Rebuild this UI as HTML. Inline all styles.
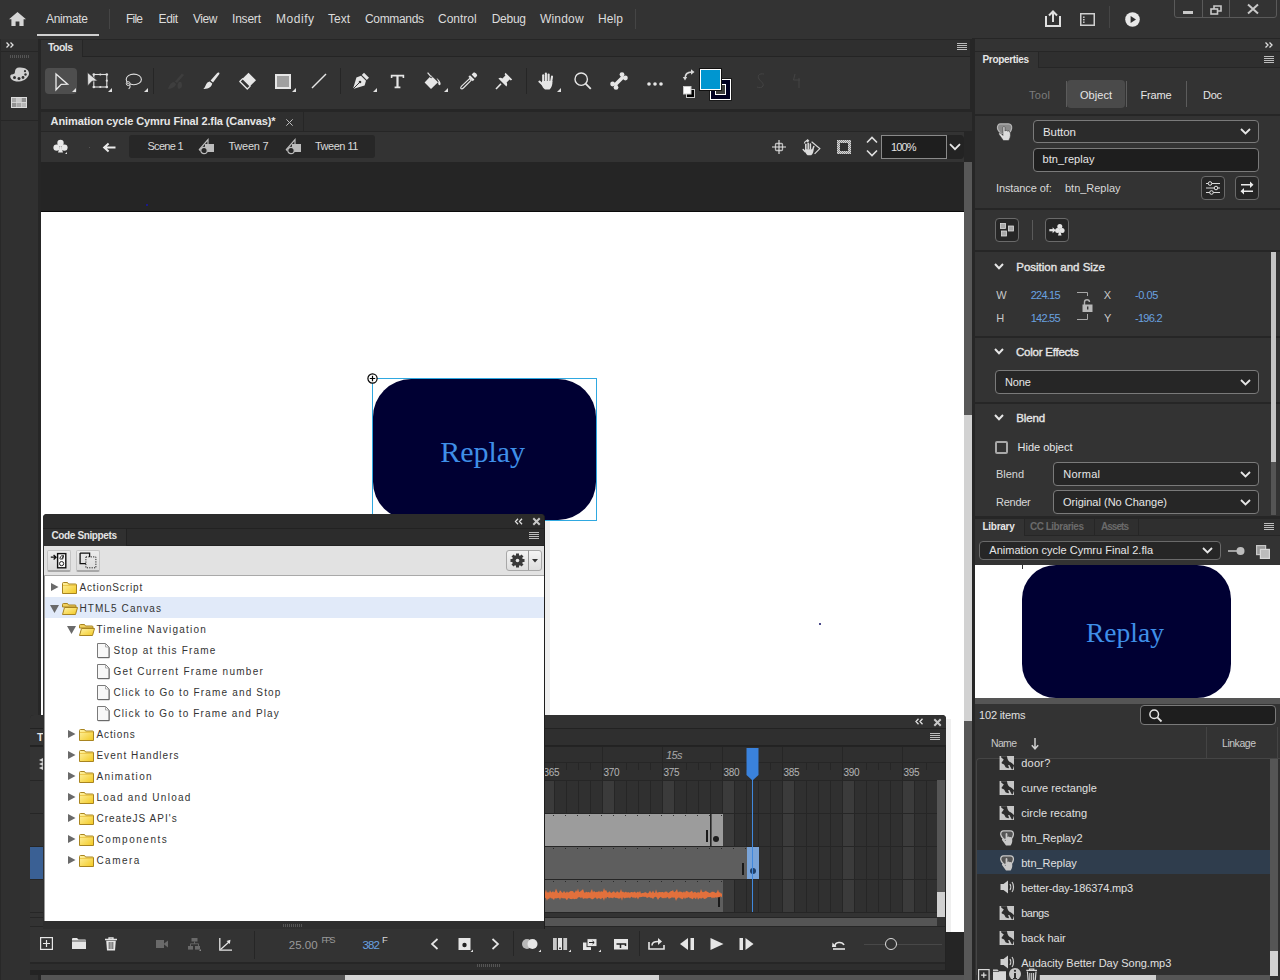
<!DOCTYPE html>
<html><head><meta charset="utf-8">
<style>
*{box-sizing:border-box;margin:0;padding:0}
html,body{width:1280px;height:980px;overflow:hidden;background:#262626;font-family:"Liberation Sans",sans-serif;color:#d8d8d8;font-size:12px;position:relative}
.a{position:absolute}
.t{position:absolute;white-space:nowrap;line-height:1}
svg{position:absolute;overflow:visible}
</style></head><body>
<!-- ============ MENUBAR ============ -->
<div class="a" style="left:0;top:0;width:1280px;height:39px;background:#333333"></div>
<svg style="left:9px;top:12px" width="17" height="14" viewBox="0 0 17 14"><path d="M8.5 0 L17 7.2 L14.6 7.2 L14.6 14 L10.4 14 L10.4 9.6 L6.6 9.6 L6.6 14 L2.4 14 L2.4 7.2 L0 7.2 Z" fill="#d6d6d6"/></svg>
<div class="t" style="left:46.00px;top:12.84px;font-size:12.0px;color:#dcdcdc;letter-spacing:-0.337px">Animate</div>
<div class="a" style="left:37px;top:34px;width:62px;height:2px;background:#cfcfcf"></div>
<div class="a" style="left:109px;top:9px;width:1px;height:20px;background:#454545"></div>
<div class="t" style="left:126.00px;top:12.84px;font-size:12.0px;color:#dcdcdc;letter-spacing:-0.779px">File</div>
<div class="t" style="left:158.60px;top:12.84px;font-size:12.0px;color:#dcdcdc;letter-spacing:-0.393px">Edit</div>
<div class="t" style="left:193.00px;top:12.84px;font-size:12.0px;color:#dcdcdc;letter-spacing:-0.431px">View</div>
<div class="t" style="left:232.00px;top:12.84px;font-size:12.0px;color:#dcdcdc;letter-spacing:-0.202px">Insert</div>
<div class="t" style="left:276.00px;top:12.84px;font-size:12.0px;color:#dcdcdc;letter-spacing:0.531px">Modify</div>
<div class="t" style="left:328.00px;top:12.84px;font-size:12.0px;color:#dcdcdc;letter-spacing:-0.003px">Text</div>
<div class="t" style="left:365.00px;top:12.84px;font-size:12.0px;color:#dcdcdc;letter-spacing:-0.336px">Commands</div>
<div class="t" style="left:438.00px;top:12.84px;font-size:12.0px;color:#dcdcdc;letter-spacing:0.003px">Control</div>
<div class="t" style="left:491.70px;top:12.84px;font-size:12.0px;color:#dcdcdc;letter-spacing:-0.265px">Debug</div>
<div class="t" style="left:540.00px;top:12.84px;font-size:12.0px;color:#dcdcdc;letter-spacing:0.184px">Window</div>
<div class="t" style="left:598.00px;top:12.84px;font-size:12.0px;color:#dcdcdc;letter-spacing:0.107px">Help</div>
<div class="a" style="left:635px;top:9px;width:1px;height:20px;background:#454545"></div>
<!-- share -->
<svg style="left:1045px;top:10px" width="16" height="17" viewBox="0 0 16 17"><path d="M1 6 V16 H15 V6" fill="none" stroke="#e0e0e0" stroke-width="2"/><path d="M8 12 V2 M4 5.5 L8 1.5 L12 5.5" fill="none" stroke="#e0e0e0" stroke-width="2"/></svg>
<!-- panel icon -->
<svg style="left:1080px;top:13px" width="15" height="13" viewBox="0 0 15 13"><rect x="0.75" y="0.75" width="13.5" height="11.5" fill="none" stroke="#d0d0d0" stroke-width="1.5"/><rect x="3" y="3.5" width="1.6" height="1.4" fill="#d0d0d0"/><rect x="3" y="6" width="1.6" height="1.4" fill="#d0d0d0"/><rect x="3" y="8.5" width="1.6" height="1.4" fill="#d0d0d0"/></svg>
<div class="a" style="left:1109px;top:6px;width:1px;height:22px;background:#454545"></div>
<svg style="left:1125px;top:12px" width="15" height="15" viewBox="0 0 15 15"><circle cx="7.5" cy="7.5" r="7.3" fill="#e8e8e8"/><path d="M5.6 4 L11 7.5 L5.6 11 Z" fill="#2f2f2f"/></svg>
<!-- window controls -->
<div class="a" style="left:1174px;top:-3px;width:103px;height:21px;border:1px solid #5a5a5a;border-radius:3px"></div>
<div class="a" style="left:1202px;top:0;width:1px;height:18px;background:#5a5a5a"></div>
<div class="a" style="left:1229px;top:0;width:1px;height:18px;background:#5a5a5a"></div>
<div class="a" style="left:1183px;top:11px;width:10px;height:3px;background:#c8c8c8"></div>
<svg style="left:1210px;top:5px" width="12" height="10" viewBox="0 0 12 10"><rect x="1" y="4" width="6.5" height="5" fill="none" stroke="#c8c8c8" stroke-width="1.6"/><path d="M4 4 V1 H11 V6 H7.5" fill="none" stroke="#c8c8c8" stroke-width="1.6"/></svg>
<svg style="left:1247px;top:4px" width="12" height="10" viewBox="0 0 12 10"><path d="M1 0.5 L11 9.5 M11 0.5 L1 9.5" stroke="#c8c8c8" stroke-width="2"/></svg>

<!-- ============ LEFT STRIP ============ -->
<div class="a" style="left:0;top:39px;width:38px;height:941px;background:#303030;border-left:1px solid #282828"></div>
<div class="a" style="left:38px;top:39px;width:3px;height:942px;background:#262626"></div>
<div class="a" style="left:1px;top:51px;width:37px;height:1px;background:#262626"></div>
<svg style="left:6px;top:42px" width="9" height="6" viewBox="0 0 9 6"><path d="M0.5 0.5 L3 3 L0.5 5.5 M4.5 0.5 L7 3 L4.5 5.5" fill="none" stroke="#e0e0e0" stroke-width="1.3"/></svg>
<div class="a" style="left:10px;top:55px;width:19px;height:3px;background:repeating-linear-gradient(90deg,#555 0 1px,transparent 1px 2px)"></div>
<svg style="left:10px;top:67px" width="20" height="15" viewBox="0 0 20 15"><path d="M9 0.5 C15 0 19.5 3 19 7 C18.5 10 15 14 9 14.5 C3 14.8 0 12 0.3 9 C0.6 7 3.5 7.5 4.5 6.5 C5.5 5.5 4 1 9 0.5 Z" fill="#d0d0d0"/><circle cx="4.5" cy="10.5" r="1.5" fill="#303030"/><circle cx="9" cy="11.5" r="1.5" fill="#303030"/><circle cx="13" cy="10.5" r="1.4" fill="#303030"/><circle cx="15.5" cy="7.5" r="1.2" fill="#303030"/><circle cx="15" cy="4.2" r="1.1" fill="#303030"/></svg>
<svg style="left:11px;top:97px" width="16" height="12" viewBox="0 0 16 12"><rect x="0" y="0" width="16" height="11" fill="#dcdcdc"/><rect x="1" y="1" width="4.3" height="4" fill="#a8a8a8"/><rect x="5.8" y="1" width="4.3" height="4" fill="#c8c8c8"/><rect x="10.6" y="1" width="4.4" height="4" fill="#909090"/><rect x="1" y="5.8" width="4.3" height="4.2" fill="#909090"/><rect x="5.8" y="5.8" width="4.3" height="4.2" fill="#a8a8a8"/><rect x="10.6" y="5.8" width="4.4" height="4.2" fill="#b8b8b8"/></svg>
<div class="a" style="left:1px;top:120px;width:37px;height:1px;background:#262626"></div>

<!-- ============ TOOLS PANEL ============ -->
<div class="a" style="left:41px;top:39px;width:931px;height:73px;background:#262626"></div>
<div class="a" style="left:41px;top:40px;width:929px;height:16px;background:#2f2f2f"></div>
<div class="a" style="left:41px;top:40px;width:41px;height:17px;background:#333333"></div>
<div class="a" style="left:82px;top:40px;width:1px;height:17px;background:#262626"></div>
<div class="t" style="left:48.00px;top:41.71px;font-size:10.5px;color:#e4e4e4;font-weight:bold;letter-spacing:-0.555px">Tools</div>
<div class="a" style="left:41px;top:57px;width:929px;height:52px;background:#333333"></div>
<div class="a" style="left:82px;top:56px;width:888px;height:1px;background:#242424"></div>
<svg style="left:957px;top:43px" width="10" height="8" viewBox="0 0 10 8"><path d="M0 0.5H10M0 2.5H10M0 4.5H10M0 6.5H10" stroke="#bdbdbd" stroke-width="1"/></svg>
<!-- tool icons -->
<div class="a" style="left:45px;top:68px;width:32px;height:26px;background:#4e4e4e;border-radius:4px"></div>
<svg style="left:55px;top:73px" width="14" height="18" viewBox="0 0 14 18"><path d="M1 1 L12.6 11.2 L6.2 11.4 L1 16.8 Z" fill="none" stroke="#ececec" stroke-width="1.3" stroke-linejoin="miter"/></svg>
<svg style="left:72px;top:88px" width="4" height="4" viewBox="0 0 4 4"><path d="M4 0 V4 H0 Z" fill="#e0e0e0"/></svg>
<!-- free transform -->
<svg style="left:87px;top:72px" width="21" height="17" viewBox="0 0 21 17"><rect x="6.8" y="2.5" width="13" height="12.5" fill="none" stroke="#e0e0e0" stroke-width="1.1"/><g fill="#e0e0e0"><circle cx="6.8" cy="2.5" r="1.3"/><circle cx="19.8" cy="2.5" r="1.3"/><circle cx="6.8" cy="15" r="1.3"/><circle cx="19.8" cy="15" r="1.3"/><circle cx="13.3" cy="2.5" r="1.1"/><circle cx="13.3" cy="15" r="1.1"/><circle cx="19.8" cy="8.7" r="1.1"/></g><path d="M0.5 0.5 L10.5 8.8 L5 9.2 L0.8 13.8 Z" fill="#e0e0e0" stroke="#333" stroke-width="0.6"/></svg>
<svg style="left:108px;top:88px" width="4" height="4" viewBox="0 0 4 4"><path d="M4 0 V4 H0 Z" fill="#e0e0e0"/></svg>
<!-- lasso -->
<svg style="left:124px;top:73px" width="18" height="17" viewBox="0 0 18 17"><ellipse cx="9.8" cy="6.4" rx="7.6" ry="5.3" fill="none" stroke="#e0e0e0" stroke-width="1.1"/><circle cx="4.2" cy="10.6" r="1.9" fill="#333" stroke="#e0e0e0" stroke-width="1"/><path d="M3 10.6 H5.4" stroke="#e0e0e0" stroke-width="0.8"/><path d="M5.6 12 C6.6 13.4 6 14.8 4.6 15.8" fill="none" stroke="#e0e0e0" stroke-width="1.1"/></svg>
<svg style="left:144px;top:88px" width="4" height="4" viewBox="0 0 4 4"><path d="M4 0 V4 H0 Z" fill="#e0e0e0"/></svg>
<div class="a" style="left:153px;top:68px;width:1px;height:26px;background:#262626"></div>
<!-- dim brush -->
<svg style="left:167px;top:73px" width="18" height="17" viewBox="0 0 18 17"><path d="M15 0.5 L17 2 L10 10 L8 8.5 Z M7 9 C4 9 2.5 12 1 16 C5 15.5 8.5 14 9 11 Z" fill="#3e3e3e"/><path d="M12 9 C10 11 10 15 12 16 C15 15 16 12 14 9 Z" fill="#3e3e3e"/></svg>
<!-- brush -->
<svg style="left:203px;top:72px" width="17" height="18" viewBox="0 0 17 18"><path d="M15.8 0.6 C16.6 1 16.6 1.8 16 2.6 L10 10.6 L7.6 8.6 L14.2 1 C14.7 0.5 15.2 0.3 15.8 0.6 Z" fill="#e6e6e6"/><path d="M6.6 9.4 L9.2 11.6 C8.8 14.6 6 17.2 0.4 17 C2.4 15.8 2.6 12 4.4 10.6 C5 10 5.8 9.6 6.6 9.4 Z" fill="#e6e6e6"/></svg>
<!-- eraser -->
<svg style="left:239px;top:72px" width="18" height="18" viewBox="0 0 18 18"><path d="M9.5 0.8 L17 8.3 L11.2 14.1 L3.7 6.6 Z" fill="#e6e6e6"/><path d="M3.7 6.6 L11.2 14.1 L8.3 17 L0.8 9.5 Z" fill="none" stroke="#e6e6e6" stroke-width="1.3" stroke-linejoin="round"/></svg>
<!-- rect -->
<div class="a" style="left:275px;top:74px;width:16px;height:15px;background:#a0a0a0;border:2px solid #e6e6e6"></div>
<svg style="left:292px;top:88px" width="4" height="4" viewBox="0 0 4 4"><path d="M4 0 V4 H0 Z" fill="#e0e0e0"/></svg>
<!-- line -->
<svg style="left:311px;top:73px" width="16" height="16" viewBox="0 0 16 16"><path d="M1 15 L15 1" stroke="#e6e6e6" stroke-width="1.4"/></svg>
<div class="a" style="left:340px;top:68px;width:1px;height:26px;background:#262626"></div>
<!-- pen -->
<svg style="left:352px;top:72px" width="18" height="18" viewBox="0 0 18 18"><path d="M12 0.8 L17 5.8 L14.8 8 L9.8 3 Z" fill="#e6e6e6"/><path d="M9 3.8 L14 8.8 L12.6 13.6 L1 17 L4.4 5.4 Z" fill="#e6e6e6"/><path d="M1 17 L7.2 10.8" stroke="#333" stroke-width="1"/><circle cx="8" cy="10" r="1.3" fill="#333"/></svg>
<svg style="left:373px;top:88px" width="4" height="4" viewBox="0 0 4 4"><path d="M4 0 V4 H0 Z" fill="#e0e0e0"/></svg>
<!-- text T -->
<svg style="left:390px;top:74px" width="15" height="15" viewBox="0 0 15 15"><path d="M0.8 0.8 H14.2 V4 H12.6 V2.6 H8.6 V12.6 H10.4 V14.2 H4.6 V12.6 H6.4 V2.6 H2.4 V4 H0.8 Z" fill="#e6e6e6"/></svg>
<!-- bucket -->
<svg style="left:424px;top:72px" width="18" height="18" viewBox="0 0 18 18"><path d="M3.6 0.6 L6.8 4.4" stroke="#e6e6e6" stroke-width="1.2"/><path d="M7.2 3.4 L14 10.2 L7 17 L0.6 10.6 Z" fill="#e6e6e6"/><path d="M6 5 C7.5 6 8 6 8 4.5" fill="none" stroke="#333" stroke-width="1"/><path d="M12.5 6 C14.5 7 16 9 16.5 11 C17 13 15.5 14 14.5 12.5 C14.2 11.5 14 10.5 14.5 9.5" fill="#e6e6e6"/></svg>
<svg style="left:444px;top:88px" width="4" height="4" viewBox="0 0 4 4"><path d="M4 0 V4 H0 Z" fill="#e0e0e0"/></svg>
<!-- eyedropper -->
<svg style="left:460px;top:72px" width="18" height="18" viewBox="0 0 18 18"><path d="M13.6 0.6 C15 -0.2 17.8 2.6 17 4 L15 6 L11.6 2.6 Z" fill="#e6e6e6"/><path d="M10 3.2 L14.4 7.6 L12.8 9.2 L8.4 4.8 Z" fill="#e6e6e6"/><path d="M9.6 6.6 L11.2 8.2 L3.4 16 C2.6 16.8 1.2 16.8 0.9 16.6 C0.7 16.3 0.8 15 1.6 14.2 Z" fill="none" stroke="#e6e6e6" stroke-width="1.1"/></svg>
<!-- pin -->
<svg style="left:495px;top:72px" width="18" height="18" viewBox="0 0 18 18"><path d="M10.5 0.8 L17.2 7.5 L15.8 8.4 L14.6 7.6 L11.6 10.6 C12.4 12 12.3 13.6 11.4 14.6 L3.4 6.6 C4.4 5.7 6 5.6 7.4 6.4 L10.4 3.4 L9.6 2.2 Z" fill="#e6e6e6"/><path d="M6 11.8 L1 17" stroke="#e6e6e6" stroke-width="1.6"/></svg>
<div class="a" style="left:526px;top:68px;width:1px;height:26px;background:#262626"></div>
<!-- hand -->
<svg style="left:538px;top:72px" width="17" height="18" viewBox="0 0 17 18"><g stroke="#e6e6e6" stroke-linecap="round" fill="none"><path d="M5.2 9 V3.2" stroke-width="2.1"/><path d="M7.9 8.5 V1.6" stroke-width="2.1"/><path d="M10.6 8.5 V2.6" stroke-width="2.1"/><path d="M13.2 9.5 L14 4.6" stroke-width="2.1"/><path d="M4.6 12.6 L1.4 9.6" stroke-width="2.1"/></g><path d="M4 9 H14.4 C14.6 12.5 13.8 15.6 11.6 17.4 H7 C5.4 16.4 4.2 14.6 3.6 12.4 Z" fill="#e6e6e6"/></svg>
<svg style="left:557px;top:88px" width="4" height="4" viewBox="0 0 4 4"><path d="M4 0 V4 H0 Z" fill="#e0e0e0"/></svg>
<!-- zoom -->
<svg style="left:574px;top:72px" width="18" height="18" viewBox="0 0 18 18"><circle cx="7.2" cy="7.2" r="6.2" fill="none" stroke="#e6e6e6" stroke-width="1.4"/><path d="M11.6 11.6 L16.8 16.8" stroke="#e6e6e6" stroke-width="1.8"/></svg>
<!-- bone -->
<svg style="left:610px;top:72px" width="18" height="18" viewBox="0 0 18 18"><path d="M4.5 13.5 L13.5 4.5" stroke="#e6e6e6" stroke-width="3.6"/><circle cx="12" cy="2.6" r="2.4" fill="#e6e6e6"/><circle cx="15.4" cy="6" r="2.4" fill="#e6e6e6"/><circle cx="2.6" cy="12" r="2.4" fill="#e6e6e6"/><circle cx="6" cy="15.4" r="2.4" fill="#e6e6e6"/></svg>
<!-- dots -->
<svg style="left:647px;top:82px" width="16" height="4" viewBox="0 0 16 4"><circle cx="2" cy="2" r="1.8" fill="#e6e6e6"/><circle cx="8" cy="2" r="1.8" fill="#e6e6e6"/><circle cx="14" cy="2" r="1.8" fill="#e6e6e6"/></svg>
<!-- swap arrow -->
<svg style="left:683px;top:69px" width="12" height="12" viewBox="0 0 12 12"><path d="M2 10 C2 5 4 3 9 3" fill="none" stroke="#d8d8d8" stroke-width="1.6"/><path d="M8 0.2 L11.5 3 L8 5.8 Z" fill="#d8d8d8"/><path d="M-0.2 8 L2 11.5 L4.2 8 Z" fill="#d8d8d8"/></svg>
<!-- default colors -->
<svg style="left:683px;top:86px" width="12" height="12" viewBox="0 0 12 12"><rect x="3.5" y="3.5" width="8" height="8" fill="#000" stroke="#c8c8c8" stroke-width="1"/><rect x="0.5" y="0.5" width="7.5" height="7.5" fill="#fff" stroke="#c8c8c8" stroke-width="1"/></svg>
<!-- stroke swatch -->
<div class="a" style="left:710px;top:79px;width:21px;height:21px;background:#000022;border:1px solid #ffffff;box-shadow:0 0 0 1px #1a1a1a"></div>
<div class="a" style="left:715px;top:84px;width:11px;height:11px;border:1px solid #ffffff;background:#3c3c3c;"></div>
<!-- fill swatch -->
<div class="a" style="left:700px;top:69px;width:21px;height:21px;background:#0096d0;border:1px solid #ffffff;box-shadow:0 0 0 1px #111"></div>
<!-- dim icons -->
<svg style="left:756px;top:73px" width="10" height="16" viewBox="0 0 10 16"><path d="M8 1 C3 0 1 3 3 6 C5 9 8 10 7 13 C6 15 3 15 1 14" fill="none" stroke="#444" stroke-width="1"/></svg>
<svg style="left:793px;top:74px" width="8" height="14" viewBox="0 0 8 14"><path d="M2 0 L0.5 6 H7 M6 4 V14" fill="none" stroke="#444" stroke-width="1"/></svg>
<!-- ============ DOC TAB BAR ============ -->
<div class="a" style="left:41px;top:112px;width:931px;height:19px;background:#2f2f2f"></div>
<div class="a" style="left:41px;top:112px;width:262px;height:19px;background:#2f2f2f"></div>
<div class="a" style="left:303px;top:112px;width:1px;height:19px;background:#262626"></div>
<div class="t" style="left:50.60px;top:115.69px;font-size:11.0px;color:#e6e6e6;font-weight:bold;letter-spacing:-0.115px">Animation cycle Cymru Final 2.fla (Canvas)*</div>
<svg style="left:286px;top:119px" width="7" height="7" viewBox="0 0 7 7"><path d="M0.3 0.3 L6.7 6.7 M6.7 0.3 L0.3 6.7" stroke="#bdbdbd" stroke-width="1"/></svg>
<div class="a" style="left:41px;top:131px;width:923px;height:1px;background:#262626"></div>
<!-- ============ EDIT BAR ============ -->
<div class="a" style="left:41px;top:132px;width:923px;height:30px;background:#333333"></div>
<svg style="left:53px;top:139px" width="16" height="16" viewBox="0 0 16 16"><circle cx="7.5" cy="4" r="3.2" fill="#e8e8e8"/><circle cx="3.6" cy="8.6" r="3.2" fill="#e8e8e8"/><circle cx="11.4" cy="8.6" r="3.2" fill="#e8e8e8"/><path d="M7.5 6 L5 13.6 H10 Z" fill="#e8e8e8"/><path d="M14 13 V15 H12 Z" fill="#e0e0e0"/></svg>
<div class="a" style="left:89px;top:147px;width:1px;height:1px;background:#555"></div>
<svg style="left:103px;top:143px" width="13" height="9" viewBox="0 0 13 9"><path d="M12.5 4.5 H3 M5.6 0.6 L1.2 4.5 L5.6 8.4" fill="none" stroke="#ececec" stroke-width="2"/></svg>
<div class="a" style="left:129px;top:135px;width:246px;height:23px;background:#272727;border-radius:3px"></div>
<div class="t" style="left:147.50px;top:141.19px;font-size:11.0px;color:#dadada;letter-spacing:-0.727px">Scene 1</div>
<svg style="left:198px;top:138px" width="17" height="17" viewBox="0 0 17 17"><path d="M1 12 L10 1.5 V6" fill="none" stroke="#bcbcbc" stroke-width="1.2"/><path d="M1 12 H4" stroke="#bcbcbc" stroke-width="1.2"/><rect x="7" y="6" width="9" height="8" fill="#bcbcbc"/><circle cx="6" cy="12.5" r="3.2" fill="#272727" stroke="#bcbcbc" stroke-width="1.2"/></svg>
<div class="t" style="left:228.40px;top:140.69px;font-size:11.0px;color:#dadada;letter-spacing:-0.214px">Tween 7</div>
<svg style="left:285px;top:138px" width="17" height="17" viewBox="0 0 17 17"><path d="M1 12 L10 1.5 V6" fill="none" stroke="#bcbcbc" stroke-width="1.2"/><path d="M1 12 H4" stroke="#bcbcbc" stroke-width="1.2"/><rect x="7" y="6" width="9" height="8" fill="#bcbcbc"/><circle cx="6" cy="12.5" r="3.2" fill="#272727" stroke="#bcbcbc" stroke-width="1.2"/></svg>
<div class="t" style="left:315.00px;top:140.69px;font-size:11.0px;color:#dadada;letter-spacing:-0.498px">Tween 11</div>
<!-- right edit icons -->
<svg style="left:772px;top:140px" width="14" height="14" viewBox="0 0 14 14"><rect x="3.5" y="3.5" width="7" height="7" fill="none" stroke="#bbb" stroke-width="1.3" rx="1"/><path d="M7 0 V14 M0 7 H14" stroke="#e6e6e6" stroke-width="1.1"/></svg>
<svg style="left:802px;top:138px" width="20" height="19" viewBox="0 0 20 19"><path d="M2.4 5.6 C2.4 4.4 3.4 3.2 5 2.8" fill="none" stroke="#d8d8d8" stroke-width="1.1"/><path d="M5.6 1 L7.4 2.8 L5.6 4.6 L3.8 2.8 Z" fill="#d8d8d8"/><path d="M9.6 3.8 L17.8 10.6 L12.6 15.8" fill="none" stroke="#d8d8d8" stroke-width="1.2"/><g stroke="#dcdcdc" stroke-linecap="round" fill="none" stroke-width="1.5"><path d="M3.8 11.6 V6.2"/><path d="M6.2 11 V5.2"/><path d="M8.4 11 V6"/><path d="M10.6 12 L11.8 8.4"/><path d="M3.2 13.8 L1.2 11.6"/></g><path d="M3 11.2 H11.6 C11.6 14 10.6 16.2 9.2 17.2 H5.6 C4.4 16.4 3.4 14.6 3 13 Z" fill="#dcdcdc"/></svg>
<svg style="left:837px;top:140px" width="14" height="14" viewBox="0 0 14 14"><rect x="0" y="0" width="14" height="14" fill="#8a8a8a"/><rect x="0" y="0" width="14" height="14" fill="url(#hatch)"/><rect x="3" y="3" width="8" height="8" fill="#2f2f2f"/></svg>
<svg style="left:0;top:0" width="0" height="0"><defs><pattern id="hatch" width="2" height="2" patternUnits="userSpaceOnUse"><rect width="1" height="1" fill="#d8d8d8"/><rect x="1" y="1" width="1" height="1" fill="#d8d8d8"/></pattern></defs></svg>
<svg style="left:866px;top:136px" width="12" height="21" viewBox="0 0 12 21"><path d="M1 6.5 L6 1.5 L11 6.5 M1 14.5 L6 19.5 L11 14.5" fill="none" stroke="#e0e0e0" stroke-width="1.6"/></svg>
<div class="a" style="left:947px;top:135px;width:17px;height:24px;background:#232323;border-radius:0 4px 4px 0"></div>
<div class="a" style="left:881px;top:135px;width:66px;height:24px;background:#1e1e1e;border:1px solid #8a8a8a"></div>
<div class="t" style="left:891.00px;top:141.69px;font-size:11.0px;color:#e4e4e4;letter-spacing:-0.845px">100%</div>
<svg style="left:949px;top:143px" width="12" height="8" viewBox="0 0 12 8"><path d="M1 1.2 L6 6.2 L11 1.2" fill="none" stroke="#e6e6e6" stroke-width="1.8"/></svg>
<!-- ============ PASTEBOARD & STAGE ============ -->
<div class="a" style="left:41px;top:162px;width:923px;height:812px;background:#252525"></div>
<div class="a" style="left:41px;top:211px;width:923px;height:1px;background:#0a0a0a"></div>
<div class="a" style="left:41px;top:212px;width:923px;height:720px;background:#ffffff"></div>
<div class="a" style="left:146px;top:204px;width:2px;height:2px;background:#1a1a8a"></div>
<div class="a" style="left:819px;top:623px;width:2px;height:2px;background:#4a4a8a"></div>
<!-- v scrollbar -->
<div class="a" style="left:964px;top:162px;width:8px;height:818px;background:#585858"></div>
<div class="a" style="left:964px;top:415px;width:8px;height:306px;background:#d2d2d2"></div>
<div class="a" style="left:972px;top:38px;width:3px;height:942px;background:#262626"></div>
<!-- h scrollbar bottom -->
<div class="a" style="left:41px;top:975px;width:923px;height:5px;background:#555555"></div>
<div class="a" style="left:345px;top:975px;width:314px;height:5px;background:#d2d2d2"></div>
<!-- button on stage -->
<div class="a" style="left:372px;top:378px;width:225px;height:143px;border:1px solid #2fa8e0"></div>
<div class="a" style="left:373px;top:379px;width:223px;height:141px;background:#000033;border-radius:38px"></div>
<div class="t" style="left:440.20px;top:436.62px;font-size:30.0px;color:#3f8fe8;font-family:'Liberation Serif',serif;letter-spacing:-0.035px">Replay</div>
<svg style="left:367px;top:373px" width="11" height="11" viewBox="0 0 11 11"><circle cx="5.5" cy="5.5" r="4.6" fill="#fff" stroke="#000" stroke-width="1.2"/><path d="M5.5 2.8 V8.2 M2.8 5.5 H8.2" stroke="#000" stroke-width="1.2"/></svg>
<!-- ============ PROPERTIES ============ -->
<div class="a" style="left:975px;top:38px;width:305px;height:942px;background:#262626"></div>
<div class="a" style="left:975px;top:39px;width:305px;height:12px;background:#333333"></div>
<svg style="left:1265px;top:42px" width="9" height="6" viewBox="0 0 9 6"><path d="M0.5 0.5 L3 3 L0.5 5.5 M4.5 0.5 L7 3 L4.5 5.5" fill="none" stroke="#e0e0e0" stroke-width="1.3"/></svg>
<div class="a" style="left:975px;top:52px;width:305px;height:16px;background:#2f2f2f"></div>
<div class="a" style="left:975px;top:52px;width:63px;height:16px;background:#333333"></div>
<div class="a" style="left:1038px;top:67px;width:242px;height:1px;background:#262626"></div>
<div class="a" style="left:1038px;top:52px;width:1px;height:16px;background:#262626"></div>
<div class="t" style="left:982.50px;top:54.53px;font-size:10.0px;color:#e6e6e6;font-weight:bold;letter-spacing:-0.329px">Properties</div>
<svg style="left:1264px;top:56px" width="10" height="8" viewBox="0 0 10 8"><path d="M0 0.5H10M0 2.5H10M0 4.5H10M0 6.5H10" stroke="#bdbdbd" stroke-width="1"/></svg>
<div class="a" style="left:975px;top:68px;width:305px;height:46px;background:#333333"></div>
<div class="a" style="left:1067px;top:80px;width:58px;height:28px;background:#4a4a4a;border-radius:4px"></div>
<div class="a" style="left:1066px;top:81px;width:1px;height:26px;background:#5c5c5c"></div>
<div class="a" style="left:1126px;top:81px;width:1px;height:26px;background:#5c5c5c"></div>
<div class="a" style="left:1186px;top:81px;width:1px;height:26px;background:#5c5c5c"></div>
<div class="t" style="left:1029.00px;top:89.94px;font-size:11.0px;color:#7c7c7c;letter-spacing:0.274px">Tool</div>
<div class="t" style="left:1080.00px;top:89.94px;font-size:11.0px;color:#e6e6e6;letter-spacing:0.042px">Object</div>
<div class="t" style="left:1140.50px;top:89.94px;font-size:11.0px;color:#e6e6e6;letter-spacing:-0.195px">Frame</div>
<div class="t" style="left:1203.00px;top:89.94px;font-size:11.0px;color:#e6e6e6;letter-spacing:-0.281px">Doc</div>
<div class="a" style="left:975px;top:116px;width:305px;height:92px;background:#333333"></div>
<svg style="left:996px;top:123px" width="17" height="18" viewBox="0 0 14 16"><path d="M3.5 0.8 H10.5 C12.6 0.8 13.6 2.6 13.4 4.6 C13.2 6.4 12.2 7.8 11.4 8.8 L4 9.4 C2.4 8 0.8 6.2 0.7 4.4 C0.6 2.4 1.6 0.8 3.5 0.8 Z" fill="#8a8a8a" stroke="#b8b8b8" stroke-width="1"/><path d="M5.6 4 C5.6 2.8 7.4 2.8 7.4 4 V7.2 C7.9 6.4 9.1 6.4 9.6 7.2 C10.3 6.8 11.4 7 11.7 8 L12.2 9 C12.6 11.6 11.8 14 10.6 15.6 H6 L2 10 C1.6 9 2.8 8.2 3.6 9 L5.6 11 Z" fill="#dcdcdc" stroke="#333" stroke-width="0.5"/></svg>
<div class="a" style="left:1033px;top:120px;width:226px;height:23px;background:#2b2b2b;border:1px solid #7a7a7a;border-radius:4px"></div>
<div class="t" style="left:1043.00px;top:127.27px;font-size:11.5px;color:#e6e6e6;letter-spacing:-0.050px">Button</div>
<svg style="left:1240px;top:128px" width="11" height="7" viewBox="0 0 11 7"><path d="M1 1 L5.5 5.5 L10 1" fill="none" stroke="#e6e6e6" stroke-width="1.8"/></svg>
<div class="a" style="left:1033px;top:148px;width:226px;height:24px;background:#1e1e1e;border:1px solid #7a7a7a;border-radius:4px"></div>
<div class="t" style="left:1042.50px;top:154.44px;font-size:11.0px;color:#e6e6e6;letter-spacing:0.070px">btn_replay</div>
<div class="t" style="left:996.00px;top:183.19px;font-size:11.0px;color:#d8d8d8;letter-spacing:-0.102px">Instance of:</div>
<div class="t" style="left:1065.00px;top:183.19px;font-size:11.0px;color:#d8d8d8;letter-spacing:-0.017px">btn_Replay</div>
<div class="a" style="left:1201px;top:176px;width:24px;height:24px;background:#262626;border:1px solid #6a6a6a;border-radius:4px"></div>
<svg style="left:1206px;top:181px" width="14" height="14" viewBox="0 0 14 14"><path d="M0 2.5 H14 M0 7 H14 M0 11.5 H14" stroke="#d8d8d8" stroke-width="1"/><circle cx="4" cy="2.5" r="1.8" fill="#262626" stroke="#e6e6e6" stroke-width="1"/><circle cx="10" cy="7" r="1.8" fill="#262626" stroke="#e6e6e6" stroke-width="1"/><circle cx="5.5" cy="11.5" r="1.8" fill="#262626" stroke="#e6e6e6" stroke-width="1"/></svg>
<div class="a" style="left:1235px;top:176px;width:24px;height:24px;background:#262626;border:1px solid #6a6a6a;border-radius:4px"></div>
<svg style="left:1240px;top:181px" width="14" height="14" viewBox="0 0 14 14"><path d="M1 3.8 H11 M3 10.2 H13" stroke="#ececec" stroke-width="1.6"/><path d="M10 0.5 L13.5 3.8 L10 7 Z M4 7 L0.5 10.2 L4 13.5 Z" fill="#ececec"/></svg>
<div class="a" style="left:975px;top:210px;width:305px;height:40px;background:#333333"></div>
<div class="a" style="left:995px;top:218px;width:24px;height:24px;background:#262626;border:1px solid #6a6a6a;border-radius:4px"></div>
<svg style="left:1000px;top:223px" width="14" height="14" viewBox="0 0 14 14"><rect x="0.5" y="0.5" width="5" height="5" fill="#a8a8a8" stroke="#dcdcdc" stroke-width="0.8"/><rect x="8.5" y="3" width="5" height="5" fill="#a8a8a8" stroke="#dcdcdc" stroke-width="0.8"/><rect x="1.5" y="8" width="5" height="5" fill="#a8a8a8" stroke="#dcdcdc" stroke-width="0.8"/></svg>
<div class="a" style="left:1032px;top:220px;width:1px;height:20px;background:#5a5a5a"></div>
<div class="a" style="left:1045px;top:218px;width:24px;height:24px;background:#262626;border:1px solid #6a6a6a;border-radius:4px"></div>
<svg style="left:1049px;top:223px" width="16" height="14" viewBox="0 0 16 14"><path d="M0.3 7.2 H4" stroke="#e6e6e6" stroke-width="2.2"/><path d="M3.6 4.2 L6.6 7.2 L3.6 10.2 Z" fill="#e6e6e6"/><circle cx="10.8" cy="3.4" r="2.5" fill="#e6e6e6"/><circle cx="8.6" cy="7.4" r="2.5" fill="#e6e6e6"/><circle cx="13.1" cy="7.4" r="2.5" fill="#e6e6e6"/><path d="M10.8 6.5 L9 12.4 H12.6 Z" fill="#e6e6e6"/></svg>
<!-- Position and Size -->
<div class="a" style="left:975px;top:252px;width:305px;height:84px;background:#333333"></div>
<svg style="left:994px;top:263px" width="10" height="7" viewBox="0 0 10 7"><path d="M1 1 L5 5.2 L9 1" fill="none" stroke="#e6e6e6" stroke-width="2"/></svg>
<div class="t" style="left:1016.25px;top:261.52px;font-size:11.5px;color:#e6e6e6;-webkit-text-stroke:0.35px #e6e6e6;letter-spacing:-0.007px">Position and Size</div>
<div class="t" style="left:996.25px;top:289.94px;font-size:11.0px;color:#c8c8c8;letter-spacing:-0.632px">W</div>
<div class="t" style="left:1030.75px;top:289.94px;font-size:11.0px;color:#6aa2e0;letter-spacing:-0.779px">224.15</div>
<div class="t" style="left:1103.75px;top:289.94px;font-size:11.0px;color:#c8c8c8;letter-spacing:0.163px">X</div>
<div class="t" style="left:1135.00px;top:289.94px;font-size:11.0px;color:#6aa2e0;letter-spacing:-0.456px">-0.05</div>
<div class="t" style="left:996.25px;top:312.69px;font-size:11.0px;color:#c8c8c8;letter-spacing:0.056px">H</div>
<div class="t" style="left:1030.75px;top:312.69px;font-size:11.0px;color:#6aa2e0;letter-spacing:-0.779px">142.55</div>
<div class="t" style="left:1104.00px;top:312.69px;font-size:11.0px;color:#c8c8c8;letter-spacing:0.163px">Y</div>
<div class="t" style="left:1135.00px;top:312.69px;font-size:11.0px;color:#6aa2e0;letter-spacing:-0.738px">-196.2</div>
<svg style="left:1077px;top:292px" width="17" height="28" viewBox="0 0 17 28"><path d="M0 0.5 H10.5 V4" fill="none" stroke="#a8a8a8" stroke-width="1"/><path d="M0 27.5 H10.5 V22" fill="none" stroke="#a8a8a8" stroke-width="1"/><path d="M7.5 13 V10 C7.5 7 12.5 7 12.5 10" fill="none" stroke="#b0b0b0" stroke-width="1.4"/><rect x="5.5" y="12.5" width="10" height="7.5" fill="#b8b8b8"/><rect x="10" y="14.5" width="1.4" height="3" fill="#333333"/></svg>
<div class="a" style="left:975px;top:338px;width:305px;height:64px;background:#333333"></div>
<svg style="left:994px;top:348px" width="10" height="7" viewBox="0 0 10 7"><path d="M1 1 L5 5.2 L9 1" fill="none" stroke="#e6e6e6" stroke-width="2"/></svg>
<div class="t" style="left:1016.00px;top:346.52px;font-size:11.5px;color:#e6e6e6;-webkit-text-stroke:0.35px #e6e6e6;letter-spacing:-0.239px">Color Effects</div>
<div class="a" style="left:995px;top:370px;width:264px;height:24px;background:#262626;border:1px solid #7a7a7a;border-radius:4px"></div>
<div class="t" style="left:1005.00px;top:377.44px;font-size:11.0px;color:#e6e6e6;letter-spacing:-0.182px">None</div>
<svg style="left:1240px;top:379px" width="11" height="7" viewBox="0 0 11 7"><path d="M1 1 L5.5 5.5 L10 1" fill="none" stroke="#e6e6e6" stroke-width="1.8"/></svg>
<div class="a" style="left:975px;top:404px;width:305px;height:112px;background:#333333"></div>
<svg style="left:994px;top:414px" width="10" height="7" viewBox="0 0 10 7"><path d="M1 1 L5 5.2 L9 1" fill="none" stroke="#e6e6e6" stroke-width="2"/></svg>
<div class="t" style="left:1016.25px;top:412.77px;font-size:11.5px;color:#e6e6e6;-webkit-text-stroke:0.35px #e6e6e6;letter-spacing:-0.103px">Blend</div>
<div class="a" style="left:995px;top:441px;width:13px;height:13px;border:2px solid #a8a8a8;border-radius:2px"></div>
<div class="t" style="left:1017.50px;top:442.44px;font-size:11.0px;color:#e6e6e6;letter-spacing:-0.003px">Hide object</div>
<div class="t" style="left:996.00px;top:468.69px;font-size:11.0px;color:#d8d8d8;letter-spacing:-0.033px">Blend</div>
<div class="a" style="left:1053px;top:462px;width:206px;height:24px;background:#262626;border:1px solid #7a7a7a;border-radius:4px"></div>
<div class="t" style="left:1063.25px;top:469.44px;font-size:11.0px;color:#e6e6e6;letter-spacing:0.260px">Normal</div>
<svg style="left:1240px;top:471px" width="11" height="7" viewBox="0 0 11 7"><path d="M1 1 L5.5 5.5 L10 1" fill="none" stroke="#e6e6e6" stroke-width="1.8"/></svg>
<div class="t" style="left:996.00px;top:496.94px;font-size:11.0px;color:#d8d8d8;letter-spacing:-0.266px">Render</div>
<div class="a" style="left:1053px;top:490px;width:206px;height:24px;background:#262626;border:1px solid #7a7a7a;border-radius:4px"></div>
<div class="t" style="left:1063.00px;top:496.69px;font-size:11.0px;color:#e6e6e6;letter-spacing:0.003px">Original (No Change)</div>
<svg style="left:1240px;top:499px" width="11" height="7" viewBox="0 0 11 7"><path d="M1 1 L5.5 5.5 L10 1" fill="none" stroke="#e6e6e6" stroke-width="1.8"/></svg>
<!-- properties scrollbar -->
<div class="a" style="left:1271px;top:252px;width:5px;height:263px;background:#555555"></div>
<div class="a" style="left:1271px;top:252px;width:5px;height:210px;background:#c4c4c4"></div>
<!-- ============ LIBRARY ============ -->
<div class="a" style="left:975px;top:516px;width:305px;height:3px;background:#262626"></div>
<div class="a" style="left:975px;top:519px;width:305px;height:17px;background:#2f2f2f"></div>
<div class="a" style="left:975px;top:519px;width:49px;height:17px;background:#333333"></div>
<div class="a" style="left:1094px;top:519px;width:1px;height:17px;background:#262626"></div>
<div class="a" style="left:1138px;top:519px;width:1px;height:17px;background:#262626"></div>
<div class="a" style="left:1024px;top:535px;width:256px;height:1px;background:#262626"></div>
<div class="a" style="left:1024px;top:519px;width:1px;height:17px;background:#262626"></div>
<div class="t" style="left:982.50px;top:521.93px;font-size:10.0px;color:#e6e6e6;font-weight:bold;letter-spacing:-0.267px">Library</div>
<div class="t" style="left:1030.00px;top:521.93px;font-size:10.0px;color:#6a6a6a;font-weight:bold;letter-spacing:-0.497px">CC Libraries</div>
<div class="t" style="left:1101.00px;top:521.93px;font-size:10.0px;color:#6a6a6a;font-weight:bold;letter-spacing:-0.960px">Assets</div>
<svg style="left:1264px;top:523px" width="10" height="8" viewBox="0 0 10 8"><path d="M0 0.5H10M0 2.5H10M0 4.5H10M0 6.5H10" stroke="#bdbdbd" stroke-width="1"/></svg>
<div class="a" style="left:975px;top:536px;width:305px;height:29px;background:#333333"></div>
<div class="a" style="left:979px;top:541px;width:242px;height:19px;background:#262626;border:1px solid #6a6a6a;border-radius:4px"></div>
<div class="t" style="left:989.30px;top:545.29px;font-size:11.0px;color:#e6e6e6;letter-spacing:0.018px">Animation cycle Cymru Final 2.fla</div>
<svg style="left:1202px;top:547px" width="11" height="7" viewBox="0 0 11 7"><path d="M1 1 L5.5 5.5 L10 1" fill="none" stroke="#e6e6e6" stroke-width="1.8"/></svg>
<svg style="left:1228px;top:546px" width="18" height="10" viewBox="0 0 18 10"><path d="M0 5 H10" stroke="#bdbdbd" stroke-width="1.6"/><circle cx="12.5" cy="5" r="4" fill="#bdbdbd"/></svg>
<svg style="left:1256px;top:545px" width="14" height="14" viewBox="0 0 14 14"><rect x="0.6" y="0.6" width="9" height="9" fill="#9a9a9a" stroke="#c8c8c8" stroke-width="1.2"/><rect x="4.4" y="4.4" width="9" height="9" fill="#bcbcbc" stroke="#d8d8d8" stroke-width="1.2"/></svg>
<!-- preview -->
<div class="a" style="left:975px;top:565px;width:305px;height:133px;background:#ffffff"></div>
<div class="a" style="left:1022px;top:565px;width:209px;height:133px;background:#000033;border-radius:34px"></div>
<div class="a" style="left:1022px;top:565px;width:1px;height:4px;background:#333"></div>
<div class="t" style="left:1086.00px;top:618.97px;font-size:27.5px;color:#3f8fe8;font-family:'Liberation Serif',serif;letter-spacing:0.021px">Replay</div>
<div class="a" style="left:975px;top:698px;width:305px;height:6px;background:#555555"></div>
<div class="a" style="left:975px;top:704px;width:305px;height:276px;background:#333333"></div>
<div class="t" style="left:979.00px;top:710.39px;font-size:11.0px;color:#e0e0e0;letter-spacing:-0.149px">102 items</div>
<div class="a" style="left:1140px;top:705px;width:136px;height:20px;background:#1e1e1e;border:1px solid #7a7a7a;border-radius:4px"></div>
<svg style="left:1149px;top:709px" width="13" height="13" viewBox="0 0 13 13"><circle cx="5.2" cy="5.2" r="4.3" fill="none" stroke="#e6e6e6" stroke-width="1.5"/><path d="M8.4 8.4 L12.5 12.5" stroke="#e6e6e6" stroke-width="1.8"/></svg>
<div class="t" style="left:991.00px;top:737.81px;font-size:10.5px;color:#c8c8c8;letter-spacing:-0.670px">Name</div>
<svg style="left:1031px;top:738px" width="8" height="12" viewBox="0 0 8 12"><path d="M4 0 V10.5 M0.8 7.2 L4 10.8 L7.2 7.2" fill="none" stroke="#d0d0d0" stroke-width="1.5"/></svg>
<div class="a" style="left:1206px;top:727px;width:1px;height:31px;background:#444"></div>
<div class="a" style="left:1277px;top:727px;width:1px;height:31px;background:#444"></div>
<div class="t" style="left:1222.00px;top:737.81px;font-size:10.5px;color:#c8c8c8;letter-spacing:-0.463px">Linkage</div>
<!-- list -->
<div class="a" style="left:976px;top:758px;width:304px;height:217px;background:#2f2f2f;border-top:1px solid #454545;border-left:1px solid #454545;border-radius:4px 0 0 0"></div>
<div class="a" style="left:977px;top:850px;width:293px;height:24px;background:#2f3d4d"></div>
<div class="a" style="left:1270px;top:759px;width:8px;height:216px;background:#555555"></div>
<div class="a" style="left:1270px;top:951px;width:8px;height:24.5px;background:#d2d2d2"></div>
<svg style="left:1000px;top:756px" width="14" height="14" viewBox="0 0 14 14"><rect x="0" y="0" width="14" height="14" fill="#c6c6c6"/><path d="M1.5 0.8 L4.6 3.6 L2.2 6.8 L4.4 7.8 L6.2 11 L8.3 11.6 L7.3 8.7 L9.7 8.2 L12.2 12.8 L13.4 9.4 L10.6 6.8 L8.4 5.6 L7 0.8 Z" fill="#2c2c2c" stroke="#2c2c2c" stroke-width="1.3" stroke-linejoin="round"/><path d="M7.7 0 C7.8 3.5 10 6.2 14 6.3" fill="none" stroke="#c6c6c6" stroke-width="1.4"/><path d="M11 0 H14 V3.4 Z" fill="#c6c6c6"/><path d="M0 0 V14" stroke="#d8d8d8" stroke-width="0.8"/></svg>
<div class="t" style="left:1021.25px;top:757.69px;font-size:11.0px;color:#e0e0e0;letter-spacing:0.217px">door?</div>
<svg style="left:1000px;top:781px" width="14" height="14" viewBox="0 0 14 14"><rect x="0" y="0" width="14" height="14" fill="#c6c6c6"/><path d="M1.5 0.8 L4.6 3.6 L2.2 6.8 L4.4 7.8 L6.2 11 L8.3 11.6 L7.3 8.7 L9.7 8.2 L12.2 12.8 L13.4 9.4 L10.6 6.8 L8.4 5.6 L7 0.8 Z" fill="#2c2c2c" stroke="#2c2c2c" stroke-width="1.3" stroke-linejoin="round"/><path d="M7.7 0 C7.8 3.5 10 6.2 14 6.3" fill="none" stroke="#c6c6c6" stroke-width="1.4"/><path d="M11 0 H14 V3.4 Z" fill="#c6c6c6"/><path d="M0 0 V14" stroke="#d8d8d8" stroke-width="0.8"/></svg>
<div class="t" style="left:1021.25px;top:782.69px;font-size:11.0px;color:#e0e0e0;letter-spacing:0.021px">curve rectangle</div>
<svg style="left:1000px;top:806px" width="14" height="14" viewBox="0 0 14 14"><rect x="0" y="0" width="14" height="14" fill="#c6c6c6"/><path d="M1.5 0.8 L4.6 3.6 L2.2 6.8 L4.4 7.8 L6.2 11 L8.3 11.6 L7.3 8.7 L9.7 8.2 L12.2 12.8 L13.4 9.4 L10.6 6.8 L8.4 5.6 L7 0.8 Z" fill="#2c2c2c" stroke="#2c2c2c" stroke-width="1.3" stroke-linejoin="round"/><path d="M7.7 0 C7.8 3.5 10 6.2 14 6.3" fill="none" stroke="#c6c6c6" stroke-width="1.4"/><path d="M11 0 H14 V3.4 Z" fill="#c6c6c6"/><path d="M0 0 V14" stroke="#d8d8d8" stroke-width="0.8"/></svg>
<div class="t" style="left:1021.25px;top:807.69px;font-size:11.0px;color:#e0e0e0;letter-spacing:0.026px">circle recatng</div>
<svg style="left:1000px;top:830px" width="14" height="16" viewBox="0 0 14 16"><path d="M3.5 0.8 H10.5 C12.6 0.8 13.6 2.6 13.4 4.6 C13.2 6.4 12.2 7.8 11.4 8.8 L4 9.4 C2.4 8 0.8 6.2 0.7 4.4 C0.6 2.4 1.6 0.8 3.5 0.8 Z" fill="#555" stroke="#c8c8c8" stroke-width="1.3"/><path d="M5.6 4 C5.6 2.8 7.4 2.8 7.4 4 V7.2 C7.9 6.4 9.1 6.4 9.6 7.2 C10.3 6.8 11.4 7 11.7 8 L12.2 9 C12.6 11.6 11.8 14 10.6 15.6 H6 L2 10 C1.6 9 2.8 8.2 3.6 9 L5.6 11 Z" fill="#c8c8c8"/></svg>
<div class="t" style="left:1021.25px;top:832.69px;font-size:11.0px;color:#e0e0e0;letter-spacing:-0.052px">btn_Replay2</div>
<svg style="left:1000px;top:855px" width="14" height="16" viewBox="0 0 14 16"><path d="M3.5 0.8 H10.5 C12.6 0.8 13.6 2.6 13.4 4.6 C13.2 6.4 12.2 7.8 11.4 8.8 L4 9.4 C2.4 8 0.8 6.2 0.7 4.4 C0.6 2.4 1.6 0.8 3.5 0.8 Z" fill="#555" stroke="#c8c8c8" stroke-width="1.3"/><path d="M5.6 4 C5.6 2.8 7.4 2.8 7.4 4 V7.2 C7.9 6.4 9.1 6.4 9.6 7.2 C10.3 6.8 11.4 7 11.7 8 L12.2 9 C12.6 11.6 11.8 14 10.6 15.6 H6 L2 10 C1.6 9 2.8 8.2 3.6 9 L5.6 11 Z" fill="#c8c8c8"/></svg>
<div class="t" style="left:1021.25px;top:857.69px;font-size:11.0px;color:#e0e0e0;letter-spacing:-0.017px">btn_Replay</div>
<svg style="left:1000px;top:880px" width="15" height="14" viewBox="0 0 15 14"><path d="M0.5 4 H3.5 L8 0.5 V13.5 L3.5 10 H0.5 Z" fill="#cfcfcf"/><path d="M10 4 C11 5.5 11 8.5 10 10 M12 2 C14 4.5 14 9.5 12 12" fill="none" stroke="#cfcfcf" stroke-width="1.2"/></svg>
<div class="t" style="left:1021.25px;top:882.69px;font-size:11.0px;color:#e0e0e0;letter-spacing:-0.118px">better-day-186374.mp3</div>
<svg style="left:1000px;top:906px" width="14" height="14" viewBox="0 0 14 14"><rect x="0" y="0" width="14" height="14" fill="#c6c6c6"/><path d="M1.5 0.8 L4.6 3.6 L2.2 6.8 L4.4 7.8 L6.2 11 L8.3 11.6 L7.3 8.7 L9.7 8.2 L12.2 12.8 L13.4 9.4 L10.6 6.8 L8.4 5.6 L7 0.8 Z" fill="#2c2c2c" stroke="#2c2c2c" stroke-width="1.3" stroke-linejoin="round"/><path d="M7.7 0 C7.8 3.5 10 6.2 14 6.3" fill="none" stroke="#c6c6c6" stroke-width="1.4"/><path d="M11 0 H14 V3.4 Z" fill="#c6c6c6"/><path d="M0 0 V14" stroke="#d8d8d8" stroke-width="0.8"/></svg>
<div class="t" style="left:1021.25px;top:907.69px;font-size:11.0px;color:#e0e0e0;letter-spacing:-0.493px">bangs</div>
<svg style="left:1000px;top:931px" width="14" height="14" viewBox="0 0 14 14"><rect x="0" y="0" width="14" height="14" fill="#c6c6c6"/><path d="M1.5 0.8 L4.6 3.6 L2.2 6.8 L4.4 7.8 L6.2 11 L8.3 11.6 L7.3 8.7 L9.7 8.2 L12.2 12.8 L13.4 9.4 L10.6 6.8 L8.4 5.6 L7 0.8 Z" fill="#2c2c2c" stroke="#2c2c2c" stroke-width="1.3" stroke-linejoin="round"/><path d="M7.7 0 C7.8 3.5 10 6.2 14 6.3" fill="none" stroke="#c6c6c6" stroke-width="1.4"/><path d="M11 0 H14 V3.4 Z" fill="#c6c6c6"/><path d="M0 0 V14" stroke="#d8d8d8" stroke-width="0.8"/></svg>
<div class="t" style="left:1021.25px;top:932.69px;font-size:11.0px;color:#e0e0e0;letter-spacing:-0.017px">back hair</div>
<svg style="left:1000px;top:955px" width="15" height="14" viewBox="0 0 15 14"><path d="M0.5 4 H3.5 L8 0.5 V13.5 L3.5 10 H0.5 Z" fill="#cfcfcf"/><path d="M10 4 C11 5.5 11 8.5 10 10 M12 2 C14 4.5 14 9.5 12 12" fill="none" stroke="#cfcfcf" stroke-width="1.2"/></svg>
<div class="t" style="left:1021.25px;top:957.69px;font-size:11.0px;color:#e0e0e0;letter-spacing:-0.015px">Audacity Better Day Song.mp3</div>
<div class="a" style="left:1039px;top:975px;width:231px;height:5px;background:#555555"></div>
<svg style="left:978px;top:968px" width="60" height="13" viewBox="0 0 60 13"><rect x="0.6" y="1.6" width="10.5" height="11" fill="#2f2f2f" stroke="#d8d8d8" stroke-width="1.2"/><path d="M5.8 4.4 V9.8 M3.1 7.1 H8.5" stroke="#e0e0e0" stroke-width="1.2"/><path d="M15 1.5 H19.5 L21 3.2 H28 V13 H15 Z" fill="#d8d8d8"/><path d="M15 3.4 H21" stroke="#2f2f2f" stroke-width="0.8"/><circle cx="37" cy="6" r="6" fill="#c8c8c8"/><rect x="36" y="5" width="2" height="6" fill="#2f2f2f"/><rect x="35" y="10" width="4" height="1.2" fill="#2f2f2f"/><circle cx="37" cy="2.8" r="1.1" fill="#2f2f2f"/><path d="M48.3 2.3 H59 M51.5 2.2 V1 H55.8 V2.2" fill="none" stroke="#d8d8d8" stroke-width="1.2"/><path d="M49.4 3.5 L50.2 13 H57.2 L58 3.5" fill="none" stroke="#d8d8d8" stroke-width="1.2"/><path d="M51.8 5 V12 M53.7 5 V12 M55.6 5 V12" stroke="#d8d8d8" stroke-width="1"/></svg>
<div class="a" style="left:1039.5px;top:975px;width:116.5px;height:5px;background:#d0d0d0"></div>
<!-- ============ TIMELINE ============ -->
<div class="a" style="left:946px;top:719px;width:5px;height:213px;background:#efefef"></div>
<div class="a" style="left:30px;top:715px;width:916px;height:260px;background:#232323;border-radius:4px 4px 0 0"></div>
<div class="a" style="left:30px;top:715px;width:916px;height:13px;background:#313131;border-radius:4px 4px 0 0"></div>
<svg style="left:914px;top:718px" width="10" height="7" viewBox="0 0 10 7"><path d="M4.5 0.8 L2 3.5 L4.5 6.2 M8.5 0.8 L6 3.5 L8.5 6.2" fill="none" stroke="#e0e0e0" stroke-width="1.3"/></svg>
<svg style="left:934px;top:719px" width="7" height="7" viewBox="0 0 7 7"><path d="M1 1 L6 6 M6 1 L1 6" stroke="#c8c8c8" stroke-width="2" stroke-linecap="square"/></svg>
<div class="a" style="left:30px;top:728px;width:915px;height:1px;background:#222"></div>
<div class="a" style="left:30px;top:729px;width:916px;height:16px;background:#2f2f2f"></div>
<div class="a" style="left:30px;top:729px;width:60px;height:17px;background:#333"></div>
<div class="t" style="left:37.00px;top:732.11px;font-size:10.5px;color:#e6e6e6;font-weight:bold">Timeline</div>
<svg style="left:930px;top:733px" width="10" height="8" viewBox="0 0 10 8"><path d="M0 0.5H10M0 2.5H10M0 4.5H10M0 6.5H10" stroke="#bdbdbd" stroke-width="1"/></svg>
<div class="a" style="left:30px;top:745px;width:916px;height:1px;background:#222"></div><div class="a" style="left:30px;top:747px;width:916px;height:1px;background:#222"></div>
<div class="a" style="left:30px;top:747px;width:513px;height:165px;background:#333333"></div>
<svg style="left:38px;top:758px" width="6" height="12" viewBox="0 0 6 12"><path d="M5 0 L1 2 L5 4 Z M5 4 L1 6 L5 8 Z M5 8 L1 10 L5 12 Z" fill="#d0d0d0"/></svg>
<div class="a" style="left:30px;top:780px;width:513px;height:1px;background:#262626"></div>
<div class="a" style="left:30px;top:813px;width:513px;height:1px;background:#262626"></div>
<div class="a" style="left:30px;top:846px;width:513px;height:1px;background:#262626"></div>
<div class="a" style="left:30px;top:847px;width:513px;height:32px;background:#3a6094"></div>
<div class="a" style="left:30px;top:879px;width:513px;height:1px;background:#262626"></div>
<div class="a" style="left:543px;top:747px;width:402px;height:33px;background:#2f2f2f"></div>
<div class="a" style="left:543px;top:762px;width:402px;height:1px;background:#262626"></div>
<div class="a" style="left:543px;top:780px;width:402px;height:1px;background:#262626"></div>
<div class="a" style="left:543px;top:781px;width:394px;height:131px;background:#303030"></div>
<div class="a" style="left:543px;top:781px;width:11.5px;height:131px;background:#3b3b3b"></div>
<div class="a" style="left:554.0px;top:781px;width:1px;height:131px;background:#262626"></div>
<div class="a" style="left:554.0px;top:763px;width:1px;height:7px;background:#262626"></div>
<div class="a" style="left:566.0px;top:781px;width:1px;height:131px;background:#262626"></div>
<div class="a" style="left:566.0px;top:763px;width:1px;height:7px;background:#262626"></div>
<div class="a" style="left:578.0px;top:781px;width:1px;height:131px;background:#262626"></div>
<div class="a" style="left:578.0px;top:763px;width:1px;height:7px;background:#262626"></div>
<div class="a" style="left:590.0px;top:781px;width:1px;height:131px;background:#262626"></div>
<div class="a" style="left:590.0px;top:763px;width:1px;height:7px;background:#262626"></div>
<div class="a" style="left:602.5px;top:781px;width:12.0px;height:131px;background:#3b3b3b"></div>
<div class="a" style="left:602.0px;top:781px;width:1px;height:131px;background:#262626"></div>
<div class="a" style="left:602.0px;top:747px;width:1px;height:33px;background:#262626"></div>
<div class="a" style="left:614.0px;top:781px;width:1px;height:131px;background:#262626"></div>
<div class="a" style="left:614.0px;top:763px;width:1px;height:7px;background:#262626"></div>
<div class="a" style="left:626.0px;top:781px;width:1px;height:131px;background:#262626"></div>
<div class="a" style="left:626.0px;top:763px;width:1px;height:7px;background:#262626"></div>
<div class="a" style="left:638.0px;top:781px;width:1px;height:131px;background:#262626"></div>
<div class="a" style="left:638.0px;top:763px;width:1px;height:7px;background:#262626"></div>
<div class="a" style="left:650.0px;top:781px;width:1px;height:131px;background:#262626"></div>
<div class="a" style="left:650.0px;top:763px;width:1px;height:7px;background:#262626"></div>
<div class="a" style="left:662.5px;top:781px;width:12.0px;height:131px;background:#3b3b3b"></div>
<div class="a" style="left:662.0px;top:781px;width:1px;height:131px;background:#262626"></div>
<div class="a" style="left:662.0px;top:747px;width:1px;height:33px;background:#262626"></div>
<div class="a" style="left:674.0px;top:781px;width:1px;height:131px;background:#262626"></div>
<div class="a" style="left:674.0px;top:763px;width:1px;height:7px;background:#262626"></div>
<div class="a" style="left:686.0px;top:781px;width:1px;height:131px;background:#262626"></div>
<div class="a" style="left:686.0px;top:763px;width:1px;height:7px;background:#262626"></div>
<div class="a" style="left:698.0px;top:781px;width:1px;height:131px;background:#262626"></div>
<div class="a" style="left:698.0px;top:763px;width:1px;height:7px;background:#262626"></div>
<div class="a" style="left:710.0px;top:781px;width:1px;height:131px;background:#262626"></div>
<div class="a" style="left:710.0px;top:763px;width:1px;height:7px;background:#262626"></div>
<div class="a" style="left:722.5px;top:781px;width:12.0px;height:131px;background:#3b3b3b"></div>
<div class="a" style="left:722.0px;top:781px;width:1px;height:131px;background:#262626"></div>
<div class="a" style="left:722.0px;top:747px;width:1px;height:33px;background:#262626"></div>
<div class="a" style="left:734.0px;top:781px;width:1px;height:131px;background:#262626"></div>
<div class="a" style="left:734.0px;top:763px;width:1px;height:7px;background:#262626"></div>
<div class="a" style="left:746.0px;top:781px;width:1px;height:131px;background:#262626"></div>
<div class="a" style="left:746.0px;top:763px;width:1px;height:7px;background:#262626"></div>
<div class="a" style="left:758.0px;top:781px;width:1px;height:131px;background:#262626"></div>
<div class="a" style="left:758.0px;top:763px;width:1px;height:7px;background:#262626"></div>
<div class="a" style="left:770.0px;top:781px;width:1px;height:131px;background:#262626"></div>
<div class="a" style="left:770.0px;top:763px;width:1px;height:7px;background:#262626"></div>
<div class="a" style="left:782.5px;top:781px;width:12.0px;height:131px;background:#3b3b3b"></div>
<div class="a" style="left:782.0px;top:781px;width:1px;height:131px;background:#262626"></div>
<div class="a" style="left:782.0px;top:747px;width:1px;height:33px;background:#262626"></div>
<div class="a" style="left:794.0px;top:781px;width:1px;height:131px;background:#262626"></div>
<div class="a" style="left:794.0px;top:763px;width:1px;height:7px;background:#262626"></div>
<div class="a" style="left:806.0px;top:781px;width:1px;height:131px;background:#262626"></div>
<div class="a" style="left:806.0px;top:763px;width:1px;height:7px;background:#262626"></div>
<div class="a" style="left:818.0px;top:781px;width:1px;height:131px;background:#262626"></div>
<div class="a" style="left:818.0px;top:763px;width:1px;height:7px;background:#262626"></div>
<div class="a" style="left:830.0px;top:781px;width:1px;height:131px;background:#262626"></div>
<div class="a" style="left:830.0px;top:763px;width:1px;height:7px;background:#262626"></div>
<div class="a" style="left:842.5px;top:781px;width:12.0px;height:131px;background:#3b3b3b"></div>
<div class="a" style="left:842.0px;top:781px;width:1px;height:131px;background:#262626"></div>
<div class="a" style="left:842.0px;top:747px;width:1px;height:33px;background:#262626"></div>
<div class="a" style="left:854.0px;top:781px;width:1px;height:131px;background:#262626"></div>
<div class="a" style="left:854.0px;top:763px;width:1px;height:7px;background:#262626"></div>
<div class="a" style="left:866.0px;top:781px;width:1px;height:131px;background:#262626"></div>
<div class="a" style="left:866.0px;top:763px;width:1px;height:7px;background:#262626"></div>
<div class="a" style="left:878.0px;top:781px;width:1px;height:131px;background:#262626"></div>
<div class="a" style="left:878.0px;top:763px;width:1px;height:7px;background:#262626"></div>
<div class="a" style="left:890.0px;top:781px;width:1px;height:131px;background:#262626"></div>
<div class="a" style="left:890.0px;top:763px;width:1px;height:7px;background:#262626"></div>
<div class="a" style="left:902.5px;top:781px;width:12.0px;height:131px;background:#3b3b3b"></div>
<div class="a" style="left:902.0px;top:781px;width:1px;height:131px;background:#262626"></div>
<div class="a" style="left:902.0px;top:747px;width:1px;height:33px;background:#262626"></div>
<div class="a" style="left:914.0px;top:781px;width:1px;height:131px;background:#262626"></div>
<div class="a" style="left:914.0px;top:763px;width:1px;height:7px;background:#262626"></div>
<div class="a" style="left:926.0px;top:781px;width:1px;height:131px;background:#262626"></div>
<div class="a" style="left:926.0px;top:763px;width:1px;height:7px;background:#262626"></div>
<div class="t" style="left:543.50px;top:768.33px;font-size:10.0px;color:#b4b4b4;letter-spacing:-0.342px">365</div>
<div class="t" style="left:603.50px;top:768.33px;font-size:10.0px;color:#b4b4b4;letter-spacing:-0.342px">370</div>
<div class="t" style="left:663.50px;top:768.33px;font-size:10.0px;color:#b4b4b4;letter-spacing:-0.342px">375</div>
<div class="t" style="left:723.50px;top:768.33px;font-size:10.0px;color:#b4b4b4;letter-spacing:-0.342px">380</div>
<div class="t" style="left:783.50px;top:768.33px;font-size:10.0px;color:#b4b4b4;letter-spacing:-0.342px">385</div>
<div class="t" style="left:843.50px;top:768.33px;font-size:10.0px;color:#b4b4b4;letter-spacing:-0.342px">390</div>
<div class="t" style="left:903.50px;top:768.33px;font-size:10.0px;color:#b4b4b4;letter-spacing:-0.342px">395</div>
<div class="t" style="left:666.00px;top:750.39px;font-size:11.0px;color:#a8a8a8;font-style:italic;letter-spacing:-0.568px">15s</div>
<div class="a" style="left:543px;top:813px;width:394px;height:1px;background:#262626"></div>
<div class="a" style="left:543px;top:846px;width:394px;height:1px;background:#262626"></div>
<div class="a" style="left:543px;top:879px;width:394px;height:1px;background:#262626"></div>
<div class="a" style="left:543px;top:912px;width:394px;height:1px;background:#262626"></div>
<div class="a" style="left:543px;top:814px;width:167px;height:32px;background:#9c9c9c"></div>
<div class="a" style="left:710.5px;top:814px;width:12px;height:32px;background:#9c9c9c;border-left:1px solid #555"></div>
<div class="a" style="left:706px;top:830px;width:2px;height:12px;background:#1a1a1a"></div>
<div class="a" style="left:713px;top:836px;width:6px;height:6px;border-radius:50%;background:#1e1e1e"></div>
<div class="a" style="left:553.0px;top:815px;width:1px;height:1px;background:#333"></div>
<div class="a" style="left:565.0px;top:815px;width:1px;height:1px;background:#333"></div>
<div class="a" style="left:577.0px;top:815px;width:1px;height:1px;background:#333"></div>
<div class="a" style="left:589.0px;top:815px;width:1px;height:1px;background:#333"></div>
<div class="a" style="left:601.0px;top:815px;width:1px;height:1px;background:#333"></div>
<div class="a" style="left:613.0px;top:815px;width:1px;height:1px;background:#333"></div>
<div class="a" style="left:625.0px;top:815px;width:1px;height:1px;background:#333"></div>
<div class="a" style="left:637.0px;top:815px;width:1px;height:1px;background:#333"></div>
<div class="a" style="left:649.0px;top:815px;width:1px;height:1px;background:#333"></div>
<div class="a" style="left:661.0px;top:815px;width:1px;height:1px;background:#333"></div>
<div class="a" style="left:673.0px;top:815px;width:1px;height:1px;background:#333"></div>
<div class="a" style="left:685.0px;top:815px;width:1px;height:1px;background:#333"></div>
<div class="a" style="left:697.0px;top:815px;width:1px;height:1px;background:#333"></div>
<div class="a" style="left:709.0px;top:815px;width:1px;height:1px;background:#333"></div>
<div class="a" style="left:721.0px;top:815px;width:1px;height:1px;background:#333"></div>
<div class="a" style="left:543px;top:847px;width:203.5px;height:32px;background:#5e5e5e"></div>
<div class="a" style="left:746.5px;top:847px;width:12px;height:32px;background:#7aa4d8"></div>
<div class="a" style="left:742px;top:863px;width:2px;height:12px;background:#1a1a1a"></div>
<div class="a" style="left:749.5px;top:868px;width:6px;height:6px;border-radius:50%;background:#20406a"></div>
<div class="a" style="left:553.0px;top:848px;width:1px;height:1px;background:#2a2a2a"></div>
<div class="a" style="left:565.0px;top:848px;width:1px;height:1px;background:#2a2a2a"></div>
<div class="a" style="left:577.0px;top:848px;width:1px;height:1px;background:#2a2a2a"></div>
<div class="a" style="left:589.0px;top:848px;width:1px;height:1px;background:#2a2a2a"></div>
<div class="a" style="left:601.0px;top:848px;width:1px;height:1px;background:#2a2a2a"></div>
<div class="a" style="left:613.0px;top:848px;width:1px;height:1px;background:#2a2a2a"></div>
<div class="a" style="left:625.0px;top:848px;width:1px;height:1px;background:#2a2a2a"></div>
<div class="a" style="left:637.0px;top:848px;width:1px;height:1px;background:#2a2a2a"></div>
<div class="a" style="left:649.0px;top:848px;width:1px;height:1px;background:#2a2a2a"></div>
<div class="a" style="left:661.0px;top:848px;width:1px;height:1px;background:#2a2a2a"></div>
<div class="a" style="left:673.0px;top:848px;width:1px;height:1px;background:#2a2a2a"></div>
<div class="a" style="left:685.0px;top:848px;width:1px;height:1px;background:#2a2a2a"></div>
<div class="a" style="left:697.0px;top:848px;width:1px;height:1px;background:#2a2a2a"></div>
<div class="a" style="left:709.0px;top:848px;width:1px;height:1px;background:#2a2a2a"></div>
<div class="a" style="left:721.0px;top:848px;width:1px;height:1px;background:#2a2a2a"></div>
<div class="a" style="left:733.0px;top:848px;width:1px;height:1px;background:#2a2a2a"></div>
<div class="a" style="left:745.0px;top:848px;width:1px;height:1px;background:#2a2a2a"></div>
<div class="a" style="left:543px;top:880px;width:179.5px;height:32px;background:#5e5e5e"></div>
<div class="a" style="left:718px;top:897px;width:2px;height:10px;background:#1a1a1a"></div>
<div class="a" style="left:553.0px;top:881px;width:1px;height:1px;background:#2a2a2a"></div>
<div class="a" style="left:565.0px;top:881px;width:1px;height:1px;background:#2a2a2a"></div>
<div class="a" style="left:577.0px;top:881px;width:1px;height:1px;background:#2a2a2a"></div>
<div class="a" style="left:589.0px;top:881px;width:1px;height:1px;background:#2a2a2a"></div>
<div class="a" style="left:601.0px;top:881px;width:1px;height:1px;background:#2a2a2a"></div>
<div class="a" style="left:613.0px;top:881px;width:1px;height:1px;background:#2a2a2a"></div>
<div class="a" style="left:625.0px;top:881px;width:1px;height:1px;background:#2a2a2a"></div>
<div class="a" style="left:637.0px;top:881px;width:1px;height:1px;background:#2a2a2a"></div>
<div class="a" style="left:649.0px;top:881px;width:1px;height:1px;background:#2a2a2a"></div>
<div class="a" style="left:661.0px;top:881px;width:1px;height:1px;background:#2a2a2a"></div>
<div class="a" style="left:673.0px;top:881px;width:1px;height:1px;background:#2a2a2a"></div>
<div class="a" style="left:685.0px;top:881px;width:1px;height:1px;background:#2a2a2a"></div>
<div class="a" style="left:697.0px;top:881px;width:1px;height:1px;background:#2a2a2a"></div>
<div class="a" style="left:709.0px;top:881px;width:1px;height:1px;background:#2a2a2a"></div>
<div class="a" style="left:721.0px;top:881px;width:1px;height:1px;background:#2a2a2a"></div>
<svg style="left:543px;top:885px" width="180" height="20" viewBox="0 0 180 20"><path d="M1.0 7.5 L2.0 7.4 L3.0 4.6 L4.0 8.1 L5.0 6.4 L6.0 7.9 L7.0 5.3 L8.0 7.3 L9.0 7.2 L10.0 6.1 L11.0 7.5 L12.0 6.5 L13.0 3.6 L14.0 6.1 L15.0 7.9 L16.0 7.8 L17.0 5.3 L18.0 6.2 L19.0 7.6 L20.0 7.7 L21.0 5.8 L22.0 7.5 L23.0 7.7 L24.0 6.2 L25.0 7.7 L26.0 7.1 L27.0 6.6 L28.0 5.8 L29.0 6.2 L30.0 5.9 L31.0 7.8 L32.0 7.3 L33.0 5.0 L34.0 6.7 L35.0 3.4 L36.0 6.9 L37.0 6.7 L38.0 5.8 L39.0 5.2 L40.0 3.9 L41.0 6.9 L42.0 7.9 L43.0 6.4 L44.0 7.3 L45.0 7.2 L46.0 6.8 L47.0 7.9 L48.0 5.7 L49.0 3.9 L50.0 7.5 L51.0 5.8 L52.0 7.0 L53.0 7.2 L54.0 6.6 L55.0 7.2 L56.0 5.6 L57.0 7.5 L58.0 6.1 L59.0 6.8 L60.0 6.4 L61.0 3.1 L62.0 5.9 L63.0 4.7 L64.0 6.9 L65.0 7.7 L66.0 6.6 L67.0 6.5 L68.0 8.0 L69.0 7.5 L70.0 6.8 L71.0 6.2 L72.0 7.8 L73.0 7.4 L74.0 6.2 L75.0 6.7 L76.0 7.8 L77.0 7.1 L78.0 4.0 L79.0 7.1 L80.0 6.6 L81.0 7.6 L82.0 7.2 L83.0 6.4 L84.0 7.8 L85.0 7.0 L86.0 7.6 L87.0 7.8 L88.0 7.1 L89.0 7.1 L90.0 7.5 L91.0 6.9 L92.0 6.4 L93.0 8.0 L94.0 7.3 L95.0 6.4 L96.0 7.8 L97.0 5.7 L98.0 8.5 L99.0 7.9 L100.0 7.9 L101.0 7.7 L102.0 7.3 L103.0 7.2 L104.0 8.2 L105.0 8.2 L106.0 7.2 L107.0 5.4 L108.0 7.4 L109.0 7.6 L110.0 5.6 L111.0 7.5 L112.0 8.1 L113.0 4.2 L114.0 7.5 L115.0 7.4 L116.0 7.0 L117.0 6.9 L118.0 7.3 L119.0 6.9 L120.0 7.0 L121.0 7.7 L122.0 6.5 L123.0 6.7 L124.0 6.6 L125.0 8.1 L126.0 7.6 L127.0 6.7 L128.0 5.9 L129.0 5.9 L130.0 5.0 L131.0 7.2 L132.0 6.8 L133.0 5.8 L134.0 4.1 L135.0 7.6 L136.0 6.6 L137.0 6.7 L138.0 6.4 L139.0 7.2 L140.0 7.6 L141.0 6.2 L142.0 7.7 L143.0 5.7 L144.0 6.3 L145.0 6.5 L146.0 7.5 L147.0 6.9 L148.0 6.6 L149.0 5.7 L150.0 7.7 L151.0 7.2 L152.0 6.7 L153.0 7.4 L154.0 7.9 L155.0 6.7 L156.0 7.8 L157.0 7.3 L158.0 4.0 L159.0 6.4 L160.0 7.2 L161.0 6.8 L162.0 6.6 L163.0 5.5 L164.0 7.1 L165.0 6.7 L166.0 8.1 L167.0 7.7 L168.0 7.6 L169.0 6.6 L170.0 6.9 L171.0 6.7 L172.0 7.7 L173.0 8.1 L174.0 7.0 L175.0 4.5 L176.0 7.6 L177.0 7.2 L178.0 8.4 L179.0 8.4 L179.0 12.5 L178.0 11.6 L177.0 11.6 L176.0 12.5 L175.0 12.0 L174.0 12.5 L173.0 12.6 L172.0 12.3 L171.0 13.2 L170.0 12.2 L169.0 13.4 L168.0 11.9 L167.0 12.0 L166.0 12.3 L165.0 11.9 L164.0 12.8 L163.0 13.6 L162.0 13.7 L161.0 13.9 L160.0 12.4 L159.0 13.2 L158.0 13.7 L157.0 13.0 L156.0 13.4 L155.0 14.7 L154.0 12.1 L153.0 14.2 L152.0 13.4 L151.0 12.6 L150.0 14.0 L149.0 14.2 L148.0 13.0 L147.0 13.6 L146.0 12.2 L145.0 12.3 L144.0 13.2 L143.0 12.6 L142.0 14.2 L141.0 12.2 L140.0 13.8 L139.0 14.6 L138.0 13.3 L137.0 13.4 L136.0 12.2 L135.0 13.1 L134.0 13.7 L133.0 15.9 L132.0 13.1 L131.0 12.2 L130.0 12.9 L129.0 12.0 L128.0 13.3 L127.0 13.1 L126.0 13.9 L125.0 12.6 L124.0 12.0 L123.0 13.4 L122.0 12.6 L121.0 13.6 L120.0 12.8 L119.0 13.4 L118.0 11.8 L117.0 12.5 L116.0 13.3 L115.0 15.0 L114.0 13.0 L113.0 11.8 L112.0 12.0 L111.0 12.5 L110.0 14.2 L109.0 12.8 L108.0 13.0 L107.0 12.6 L106.0 12.1 L105.0 12.6 L104.0 13.0 L103.0 11.9 L102.0 11.7 L101.0 12.1 L100.0 11.6 L99.0 12.0 L98.0 12.0 L97.0 12.2 L96.0 12.3 L95.0 14.6 L94.0 12.4 L93.0 12.6 L92.0 13.6 L91.0 11.9 L90.0 13.3 L89.0 11.8 L88.0 12.1 L87.0 13.4 L86.0 12.5 L85.0 12.8 L84.0 12.8 L83.0 12.7 L82.0 13.2 L81.0 13.3 L80.0 11.9 L79.0 15.8 L78.0 12.5 L77.0 13.4 L76.0 13.6 L75.0 13.5 L74.0 12.8 L73.0 13.0 L72.0 12.8 L71.0 12.1 L70.0 13.5 L69.0 12.7 L68.0 13.0 L67.0 12.4 L66.0 13.4 L65.0 12.1 L64.0 12.1 L63.0 13.9 L62.0 12.2 L61.0 15.7 L60.0 13.3 L59.0 12.8 L58.0 14.5 L57.0 13.4 L56.0 13.2 L55.0 13.3 L54.0 14.5 L53.0 12.7 L52.0 12.4 L51.0 13.6 L50.0 13.9 L49.0 14.6 L48.0 13.4 L47.0 13.2 L46.0 12.7 L45.0 13.6 L44.0 13.4 L43.0 13.5 L42.0 13.2 L41.0 13.6 L40.0 14.1 L39.0 12.1 L38.0 13.5 L37.0 12.3 L36.0 12.2 L35.0 12.5 L34.0 14.0 L33.0 13.7 L32.0 14.0 L31.0 14.3 L30.0 13.5 L29.0 14.2 L28.0 14.0 L27.0 14.1 L26.0 13.1 L25.0 13.4 L24.0 15.3 L23.0 14.3 L22.0 12.9 L21.0 13.8 L20.0 13.0 L19.0 13.6 L18.0 12.4 L17.0 15.0 L16.0 12.7 L15.0 13.3 L14.0 12.9 L13.0 13.7 L12.0 12.7 L11.0 14.9 L10.0 13.9 L9.0 13.2 L8.0 13.5 L7.0 12.3 L6.0 14.3 L5.0 13.6 L4.0 15.7 L3.0 13.2 L2.0 12.7 L1.0 12.7 Z" fill="#e2703c"/></svg>
<svg style="left:746px;top:748px" width="13" height="33" viewBox="0 0 13 33"><path d="M0.5 0 H12.5 V27 L6.5 32.5 L0.5 27 Z" fill="#3a82dc"/></svg>
<div class="a" style="left:751.5px;top:780px;width:1.2px;height:137px;background:#4088dc"></div>
<div class="a" style="left:937px;top:780px;width:8px;height:137px;background:#555"></div>
<div class="a" style="left:937px;top:892px;width:8px;height:25px;background:#d0d0d0"></div>
<div class="a" style="left:30px;top:912px;width:907px;height:14px;background:#333333;border-top:1px solid #262626"></div>
<div class="a" style="left:30px;top:917px;width:907px;height:1px;background:#262626"></div>
<div class="a" style="left:543px;top:918px;width:394px;height:8px;background:#555"></div>
<div class="a" style="left:937px;top:917px;width:8px;height:9px;background:#333333"></div>
<div class="a" style="left:30px;top:926px;width:915px;height:3px;background:#333333;border-top:1px solid #262626"></div>
<div class="a" style="left:30px;top:929px;width:915px;height:33px;background:#333333"></div>
<div class="a" style="left:30px;top:962px;width:915px;height:2px;background:#262626"></div>
<div class="a" style="left:30px;top:964px;width:915px;height:6px;background:#2e2e2e"></div>
<div class="a" style="left:30px;top:970px;width:934px;height:5px;background:#232323"></div>
<!-- timeline toolbar icons -->
<svg style="left:40px;top:937px" width="13" height="13" viewBox="0 0 13 13"><rect x="0.6" y="0.6" width="11.8" height="11.8" fill="none" stroke="#e6e6e6" stroke-width="1.2"/><path d="M6.5 3 V10 M3 6.5 H10" stroke="#e6e6e6" stroke-width="1.2"/></svg>
<svg style="left:72px;top:938px" width="14" height="12" viewBox="0 0 14 12"><path d="M0 1 Q0 0 1 0 H5 L6.5 1.5 H13 Q14 1.5 14 2.5 V11 H0 Z" fill="#e6e6e6"/><path d="M0 3 H14" stroke="#333333" stroke-width="0.8"/></svg>
<svg style="left:105px;top:937px" width="12" height="14" viewBox="0 0 12 14"><path d="M0 2.5 H12 M4 2.5 V0.8 H8 V2.5" fill="none" stroke="#e6e6e6" stroke-width="1.3"/><path d="M1.2 3.8 H10.8 L10 13.5 H2 Z" fill="#e6e6e6"/><path d="M4.2 5 V12 M6 5 V12 M7.8 5 V12" stroke="#333333" stroke-width="0.8"/></svg>
<svg style="left:156px;top:940px" width="12" height="8" viewBox="0 0 12 8"><rect x="0" y="0" width="8" height="8" fill="#6a6a6a"/><path d="M7.5 4 L12 0.5 V7.5 Z" fill="#6a6a6a"/></svg>
<svg style="left:188px;top:938px" width="13" height="13" viewBox="0 0 13 13"><rect x="3.5" y="0" width="6" height="3.5" fill="#6a6a6a"/><path d="M6.5 3.5 V5.8 M2.5 8 V5.8 H10.5 V8" fill="none" stroke="#6a6a6a" stroke-width="0.9"/><rect x="0" y="8" width="5" height="3.6" fill="#6a6a6a"/><rect x="7" y="8" width="5" height="3.6" fill="#6a6a6a"/><path d="M13 11 V13 H11 Z" fill="#8a8a8a"/></svg>
<svg style="left:219px;top:938px" width="14" height="13" viewBox="0 0 14 13"><path d="M0.8 0 V12.2 H13" fill="none" stroke="#e6e6e6" stroke-width="1.3"/><path d="M1.5 11.5 L10.5 3.5" stroke="#e6e6e6" stroke-width="1.2"/><path d="M7.5 3 L11.5 1.8 L10.8 6 Z" fill="#e6e6e6"/></svg>
<div class="a" style="left:254px;top:931px;width:1px;height:28px;background:#262626"></div>
<div class="t" style="left:288.75px;top:940.07px;font-size:11.5px;color:#9a9a9a;letter-spacing:0.005px">25.00</div>
<div class="t" style="left:321.60px;top:935.88px;font-size:9.0px;color:#9a9a9a;letter-spacing:-1.752px">FPS</div>
<div class="t" style="left:362.60px;top:940.07px;font-size:11.5px;color:#6aa2e0;letter-spacing:-0.894px">382</div>
<div class="t" style="left:382.00px;top:935.46px;font-size:9.5px;color:#d8d8d8">F</div>
<svg style="left:430px;top:938px" width="9" height="12" viewBox="0 0 9 12"><path d="M7.5 1 L2 6 L7.5 11" fill="none" stroke="#e6e6e6" stroke-width="1.7"/></svg>
<svg style="left:458px;top:938px" width="15" height="14" viewBox="0 0 15 14"><rect x="0.5" y="0" width="12" height="12" fill="#e6e6e6"/><circle cx="6.5" cy="7" r="2.2" fill="#222"/><path d="M15 11.5 V14 H12.5 Z" fill="#e0e0e0"/></svg>
<svg style="left:491px;top:938px" width="9" height="12" viewBox="0 0 9 12"><path d="M1.5 1 L7 6 L1.5 11" fill="none" stroke="#e6e6e6" stroke-width="1.7"/></svg>
<div class="a" style="left:513px;top:931px;width:1px;height:25px;background:#262626"></div>
<svg style="left:522px;top:938px" width="19" height="14" viewBox="0 0 19 14"><circle cx="5" cy="6" r="5" fill="#b8b8b8"/><circle cx="10.5" cy="6" r="5" fill="#e6e6e6"/><path d="M19 11.5 V14 H16.5 Z" fill="#e0e0e0"/></svg>
<svg style="left:553px;top:938px" width="18" height="14" viewBox="0 0 18 14"><rect x="0" y="0" width="3.8" height="12" fill="#c8c8c8"/><rect x="5" y="0" width="4" height="12" fill="#e6e6e6"/><rect x="10.3" y="0" width="3.8" height="12" fill="#c8c8c8"/><rect x="6.2" y="9.5" width="1.6" height="1.6" fill="#222"/><path d="M18 11.5 V14 H15.5 Z" fill="#e0e0e0"/></svg>
<svg style="left:583px;top:938px" width="18" height="14" viewBox="0 0 18 14"><rect x="0" y="4.5" width="8" height="7.5" fill="#e6e6e6"/><rect x="4" y="0.6" width="10" height="8" fill="#e6e6e6" stroke="#333333" stroke-width="1"/><path d="M6 4.5 H11 M9.5 3 L11.2 4.5 L9.5 6" fill="none" stroke="#222" stroke-width="1"/><path d="M18 11.5 V14 H15.5 Z" fill="#e0e0e0"/></svg>
<svg style="left:614px;top:939px" width="14" height="11" viewBox="0 0 14 11"><rect x="0" y="0" width="14" height="10.5" fill="#e6e6e6"/><path d="M2.5 5 H11.5 V7 M6.5 5 V9" fill="none" stroke="#222" stroke-width="1.5"/></svg>
<div class="a" style="left:639px;top:931px;width:1px;height:25px;background:#262626"></div>
<svg style="left:648px;top:938px" width="17" height="12" viewBox="0 0 17 12"><path d="M1 4 V11 H16 V7" fill="none" stroke="#e6e6e6" stroke-width="1.6"/><path d="M4 7.5 C4 4.5 6 3.5 10 3.5" fill="none" stroke="#e6e6e6" stroke-width="1.6"/><path d="M10 0 L14 3.5 L10 7 Z" fill="#e6e6e6"/></svg>
<svg style="left:680px;top:938px" width="15" height="12" viewBox="0 0 15 12"><path d="M0 6 L8 0 V12 Z" fill="#e6e6e6"/><rect x="10.5" y="0" width="3.5" height="12" fill="#e6e6e6"/></svg>
<svg style="left:710px;top:938px" width="14" height="12" viewBox="0 0 14 12"><path d="M0.5 0 L13.5 6 L0.5 12 Z" fill="#e6e6e6"/></svg>
<svg style="left:739px;top:938px" width="15" height="12" viewBox="0 0 15 12"><rect x="0.5" y="0" width="3.5" height="12" fill="#e6e6e6"/><path d="M6.5 0 L14.5 6 L6.5 12 Z" fill="#e6e6e6"/></svg>
<svg style="left:832px;top:939px" width="14" height="11" viewBox="0 0 14 11"><path d="M1 10 H13" stroke="#e6e6e6" stroke-width="1.6"/><path d="M3 7 C3 3 10 2 12 6" fill="none" stroke="#e6e6e6" stroke-width="1.6"/><path d="M0.5 3.5 L4.5 8 L0 8 Z" fill="#e6e6e6"/></svg>
<div class="a" style="left:864px;top:943.5px;width:78px;height:1px;background:#484848"></div>
<div class="a" style="left:885px;top:938px;width:12px;height:12px;border-radius:50%;border:1.8px solid #dcdcdc;background:#333333"></div>
<div class="a" style="left:477px;top:964px;width:23px;height:3px;background:repeating-linear-gradient(90deg,#555 0 1px,transparent 1px 2px)"></div>
<!-- ============ CODE SNIPPETS ============ -->
<div class="a" style="left:545px;top:521px;width:5px;height:194px;background:#efefef"></div>
<div class="a" style="left:43px;top:514px;width:502px;height:415px;background:#2e2e2e;border-radius:4px 4px 0 0;border-right:1px solid #1e1e1e"></div>
<div class="a" style="left:43px;top:514px;width:501px;height:14px;background:#2b2b2b;border-radius:4px 4px 0 0"></div>
<svg style="left:514px;top:518px" width="9" height="7" viewBox="0 0 9 7"><path d="M4 0.8 L1.5 3.5 L4 6.2 M8 0.8 L5.5 3.5 L8 6.2" fill="none" stroke="#e0e0e0" stroke-width="1.3"/></svg>
<svg style="left:533px;top:518px" width="7" height="7" viewBox="0 0 7 7"><path d="M1 1 L6 6 M6 1 L1 6" stroke="#c8c8c8" stroke-width="2" stroke-linecap="square"/></svg>
<div class="a" style="left:43px;top:528px;width:501px;height:1px;background:#222"></div>
<div class="a" style="left:43px;top:529px;width:501px;height:17px;background:#303030"></div>
<div class="a" style="left:126px;top:529px;width:418px;height:17px;background:#2c2c2c"></div>
<div class="a" style="left:126px;top:545px;width:418px;height:1px;background:#222"></div>
<div class="a" style="left:126px;top:529px;width:1px;height:17px;background:#222"></div>
<div class="t" style="left:51.50px;top:531.03px;font-size:10.0px;color:#e4e4e4;font-weight:bold;letter-spacing:-0.375px">Code Snippets</div>
<svg style="left:529px;top:532px" width="10" height="8" viewBox="0 0 10 8"><path d="M0 0.5H10M0 2.5H10M0 4.5H10M0 6.5H10" stroke="#bdbdbd" stroke-width="1"/></svg>
<div class="a" style="left:44px;top:546px;width:500px;height:30px;background:#e2e2e2;border-bottom:1px solid #a9a9a9"></div>
<div class="a" style="left:46.5px;top:549.5px;width:24px;height:22px;background:linear-gradient(#ececec,#dcdcdc);border:1px solid #c4c4c4;border-bottom:2px solid #a8a8a8;border-radius:2px"></div>
<svg style="left:50px;top:552px" width="17" height="17" viewBox="0 0 17 17"><path d="M0.8 5.2 H5.6 M3.6 3 L6 5.2 L3.6 7.4" fill="none" stroke="#111" stroke-width="1.3"/><rect x="7.6" y="1.6" width="8.2" height="14.2" fill="#fafafa" stroke="#111" stroke-width="1.4"/><path d="M13.6 4 C12.6 3.2 10.4 3.6 10 6.2 C9.8 7.6 11.6 7.6 12.6 6 L13.4 3.6 L12.6 7.4" fill="none" stroke="#222" stroke-width="1"/><circle cx="11.6" cy="11.6" r="2.1" fill="none" stroke="#222" stroke-width="1"/></svg>
<div class="a" style="left:75.5px;top:549.5px;width:24px;height:22px;background:linear-gradient(#ececec,#dcdcdc);border:1px solid #c4c4c4;border-bottom:2px solid #a8a8a8;border-radius:2px"></div>
<svg style="left:79px;top:552px" width="18" height="17" viewBox="0 0 18 17"><rect x="6.9" y="4.9" width="10" height="10.9" fill="none" stroke="#222" stroke-width="1" stroke-dasharray="1.2 1.2"/><path d="M1.1 1.1 H10.6 V5 M6.9 11.6 H1.1 V1.1" fill="none" stroke="#111" stroke-width="1.3"/></svg>
<div class="a" style="left:506px;top:549.5px;width:36px;height:21.5px;background:linear-gradient(#f4f4f4,#dedede);border:1px solid #a8a8a8;border-radius:3px"></div>
<div class="a" style="left:528px;top:550px;width:1px;height:20px;background:#999"></div>
<svg style="left:510px;top:553px" width="15" height="15" viewBox="0 0 15 15"><g fill="#3a3a3a"><circle cx="7.5" cy="7.5" r="5.4"/><rect x="6" y="0.5" width="3" height="14"/><rect x="0.5" y="6" width="14" height="3"/><rect x="6" y="0.5" width="3" height="14" transform="rotate(45 7.5 7.5)"/><rect x="6" y="0.5" width="3" height="14" transform="rotate(-45 7.5 7.5)"/></g><circle cx="7.5" cy="7.5" r="1.8" fill="#e8e8e8"/></svg>
<svg style="left:532px;top:559px" width="6" height="3.5" viewBox="0 0 6 3.5"><path d="M0 0 H6 L3 3.5 Z" fill="#333"/></svg>
<div class="a" style="left:44px;top:576px;width:500px;height:345px;background:#ffffff;border-left:1px solid #9a9a9a"></div>
<div class="a" style="left:45px;top:597px;width:499px;height:21px;background:#e1eaf9"></div>
<svg style="left:51px;top:583px" width="8" height="8" viewBox="0 0 8 8"><path d="M0 0 L7.5 4 L0 8 Z" fill="#6a6a6a"/></svg>
<svg style="left:62px;top:582px" width="15" height="12" viewBox="0 0 15 12"><defs><linearGradient id="fg0" x1="0" y1="0" x2="1" y2="1"><stop offset="0" stop-color="#fff3a8"/><stop offset="1" stop-color="#f2c820"/></linearGradient></defs><path d="M0.5 1.5 Q0.5 0.5 1.5 0.5 H5.5 L6.5 2 H13.5 Q14.5 2 14.5 3 V11.5 H0.5 Z" fill="url(#fg0)" stroke="#a88420" stroke-width="1"/><path d="M1 3.5 H14" stroke="#e8c040" stroke-width="0.8"/></svg>
<div class="t" style="left:79.40px;top:582.53px;font-size:10.0px;color:#333333;letter-spacing:0.859px">ActionScript</div>
<svg style="left:50px;top:605px" width="9" height="8" viewBox="0 0 9 8"><path d="M0 0 H9 L4.5 8 Z" fill="#6a6a6a"/></svg>
<svg style="left:62px;top:603px" width="16" height="12" viewBox="0 0 16 12"><defs><linearGradient id="fg1" x1="0" y1="0" x2="1" y2="1"><stop offset="0" stop-color="#fff3a8"/><stop offset="1" stop-color="#f2c820"/></linearGradient></defs><path d="M0.5 1.5 Q0.5 0.5 1.5 0.5 H5.5 L6.5 2 H13 Q14 2 14 3 V4 H0.5 Z" fill="#f0d060" stroke="#a88420" stroke-width="1"/><path d="M0.5 11.5 L2.5 4.5 H15.5 L13.5 11.5 Z" fill="url(#fg1)" stroke="#a88420" stroke-width="1"/></svg>
<div class="t" style="left:79.40px;top:603.53px;font-size:10.0px;color:#333333;letter-spacing:1.103px">HTML5 Canvas</div>
<svg style="left:67px;top:626px" width="9" height="8" viewBox="0 0 9 8"><path d="M0 0 H9 L4.5 8 Z" fill="#6a6a6a"/></svg>
<svg style="left:79px;top:624px" width="16" height="12" viewBox="0 0 16 12"><defs><linearGradient id="fg2" x1="0" y1="0" x2="1" y2="1"><stop offset="0" stop-color="#fff3a8"/><stop offset="1" stop-color="#f2c820"/></linearGradient></defs><path d="M0.5 1.5 Q0.5 0.5 1.5 0.5 H5.5 L6.5 2 H13 Q14 2 14 3 V4 H0.5 Z" fill="#f0d060" stroke="#a88420" stroke-width="1"/><path d="M0.5 11.5 L2.5 4.5 H15.5 L13.5 11.5 Z" fill="url(#fg2)" stroke="#a88420" stroke-width="1"/></svg>
<div class="t" style="left:96.40px;top:624.53px;font-size:10.0px;color:#333333;letter-spacing:1.225px">Timeline Navigation</div>
<svg style="left:97px;top:643px" width="13" height="15" viewBox="0 0 13 15"><path d="M0.5 0.5 H8.5 L12 4 V14.5 H0.5 Z" fill="#f8f8f8" stroke="#7a7a7a" stroke-width="1"/><path d="M8.5 0.5 V4 H12" fill="none" stroke="#9a9a9a" stroke-width="0.8"/><path d="M1.2 14.8 H12.3 V4.5" fill="none" stroke="#555" stroke-width="0.6"/></svg>
<div class="t" style="left:113.40px;top:645.53px;font-size:10.0px;color:#333333;letter-spacing:1.194px">Stop at this Frame</div>
<svg style="left:97px;top:664px" width="13" height="15" viewBox="0 0 13 15"><path d="M0.5 0.5 H8.5 L12 4 V14.5 H0.5 Z" fill="#f8f8f8" stroke="#7a7a7a" stroke-width="1"/><path d="M8.5 0.5 V4 H12" fill="none" stroke="#9a9a9a" stroke-width="0.8"/><path d="M1.2 14.8 H12.3 V4.5" fill="none" stroke="#555" stroke-width="0.6"/></svg>
<div class="t" style="left:113.40px;top:666.53px;font-size:10.0px;color:#333333;letter-spacing:1.252px">Get Current Frame number</div>
<svg style="left:97px;top:685px" width="13" height="15" viewBox="0 0 13 15"><path d="M0.5 0.5 H8.5 L12 4 V14.5 H0.5 Z" fill="#f8f8f8" stroke="#7a7a7a" stroke-width="1"/><path d="M8.5 0.5 V4 H12" fill="none" stroke="#9a9a9a" stroke-width="0.8"/><path d="M1.2 14.8 H12.3 V4.5" fill="none" stroke="#555" stroke-width="0.6"/></svg>
<div class="t" style="left:113.40px;top:687.53px;font-size:10.0px;color:#333333;letter-spacing:1.161px">Click to Go to Frame and Stop</div>
<svg style="left:97px;top:706px" width="13" height="15" viewBox="0 0 13 15"><path d="M0.5 0.5 H8.5 L12 4 V14.5 H0.5 Z" fill="#f8f8f8" stroke="#7a7a7a" stroke-width="1"/><path d="M8.5 0.5 V4 H12" fill="none" stroke="#9a9a9a" stroke-width="0.8"/><path d="M1.2 14.8 H12.3 V4.5" fill="none" stroke="#555" stroke-width="0.6"/></svg>
<div class="t" style="left:113.40px;top:708.53px;font-size:10.0px;color:#333333;letter-spacing:1.143px">Click to Go to Frame and Play</div>
<svg style="left:68px;top:730px" width="8" height="8" viewBox="0 0 8 8"><path d="M0 0 L7.5 4 L0 8 Z" fill="#6a6a6a"/></svg>
<svg style="left:79px;top:729px" width="15" height="12" viewBox="0 0 15 12"><defs><linearGradient id="fg7" x1="0" y1="0" x2="1" y2="1"><stop offset="0" stop-color="#fff3a8"/><stop offset="1" stop-color="#f2c820"/></linearGradient></defs><path d="M0.5 1.5 Q0.5 0.5 1.5 0.5 H5.5 L6.5 2 H13.5 Q14.5 2 14.5 3 V11.5 H0.5 Z" fill="url(#fg7)" stroke="#a88420" stroke-width="1"/><path d="M1 3.5 H14" stroke="#e8c040" stroke-width="0.8"/></svg>
<div class="t" style="left:96.40px;top:729.53px;font-size:10.0px;color:#333333;letter-spacing:0.918px">Actions</div>
<svg style="left:68px;top:751px" width="8" height="8" viewBox="0 0 8 8"><path d="M0 0 L7.5 4 L0 8 Z" fill="#6a6a6a"/></svg>
<svg style="left:79px;top:750px" width="15" height="12" viewBox="0 0 15 12"><defs><linearGradient id="fg8" x1="0" y1="0" x2="1" y2="1"><stop offset="0" stop-color="#fff3a8"/><stop offset="1" stop-color="#f2c820"/></linearGradient></defs><path d="M0.5 1.5 Q0.5 0.5 1.5 0.5 H5.5 L6.5 2 H13.5 Q14.5 2 14.5 3 V11.5 H0.5 Z" fill="url(#fg8)" stroke="#a88420" stroke-width="1"/><path d="M1 3.5 H14" stroke="#e8c040" stroke-width="0.8"/></svg>
<div class="t" style="left:96.40px;top:750.53px;font-size:10.0px;color:#333333;letter-spacing:1.064px">Event Handlers</div>
<svg style="left:68px;top:772px" width="8" height="8" viewBox="0 0 8 8"><path d="M0 0 L7.5 4 L0 8 Z" fill="#6a6a6a"/></svg>
<svg style="left:79px;top:771px" width="15" height="12" viewBox="0 0 15 12"><defs><linearGradient id="fg9" x1="0" y1="0" x2="1" y2="1"><stop offset="0" stop-color="#fff3a8"/><stop offset="1" stop-color="#f2c820"/></linearGradient></defs><path d="M0.5 1.5 Q0.5 0.5 1.5 0.5 H5.5 L6.5 2 H13.5 Q14.5 2 14.5 3 V11.5 H0.5 Z" fill="url(#fg9)" stroke="#a88420" stroke-width="1"/><path d="M1 3.5 H14" stroke="#e8c040" stroke-width="0.8"/></svg>
<div class="t" style="left:96.40px;top:771.53px;font-size:10.0px;color:#333333;letter-spacing:1.342px">Animation</div>
<svg style="left:68px;top:793px" width="8" height="8" viewBox="0 0 8 8"><path d="M0 0 L7.5 4 L0 8 Z" fill="#6a6a6a"/></svg>
<svg style="left:79px;top:792px" width="15" height="12" viewBox="0 0 15 12"><defs><linearGradient id="fg10" x1="0" y1="0" x2="1" y2="1"><stop offset="0" stop-color="#fff3a8"/><stop offset="1" stop-color="#f2c820"/></linearGradient></defs><path d="M0.5 1.5 Q0.5 0.5 1.5 0.5 H5.5 L6.5 2 H13.5 Q14.5 2 14.5 3 V11.5 H0.5 Z" fill="url(#fg10)" stroke="#a88420" stroke-width="1"/><path d="M1 3.5 H14" stroke="#e8c040" stroke-width="0.8"/></svg>
<div class="t" style="left:96.40px;top:792.53px;font-size:10.0px;color:#333333;letter-spacing:1.273px">Load and Unload</div>
<svg style="left:68px;top:814px" width="8" height="8" viewBox="0 0 8 8"><path d="M0 0 L7.5 4 L0 8 Z" fill="#6a6a6a"/></svg>
<svg style="left:79px;top:813px" width="15" height="12" viewBox="0 0 15 12"><defs><linearGradient id="fg11" x1="0" y1="0" x2="1" y2="1"><stop offset="0" stop-color="#fff3a8"/><stop offset="1" stop-color="#f2c820"/></linearGradient></defs><path d="M0.5 1.5 Q0.5 0.5 1.5 0.5 H5.5 L6.5 2 H13.5 Q14.5 2 14.5 3 V11.5 H0.5 Z" fill="url(#fg11)" stroke="#a88420" stroke-width="1"/><path d="M1 3.5 H14" stroke="#e8c040" stroke-width="0.8"/></svg>
<div class="t" style="left:96.40px;top:813.53px;font-size:10.0px;color:#333333;letter-spacing:1.028px">CreateJS API&#x27;s</div>
<svg style="left:68px;top:835px" width="8" height="8" viewBox="0 0 8 8"><path d="M0 0 L7.5 4 L0 8 Z" fill="#6a6a6a"/></svg>
<svg style="left:79px;top:834px" width="15" height="12" viewBox="0 0 15 12"><defs><linearGradient id="fg12" x1="0" y1="0" x2="1" y2="1"><stop offset="0" stop-color="#fff3a8"/><stop offset="1" stop-color="#f2c820"/></linearGradient></defs><path d="M0.5 1.5 Q0.5 0.5 1.5 0.5 H5.5 L6.5 2 H13.5 Q14.5 2 14.5 3 V11.5 H0.5 Z" fill="url(#fg12)" stroke="#a88420" stroke-width="1"/><path d="M1 3.5 H14" stroke="#e8c040" stroke-width="0.8"/></svg>
<div class="t" style="left:96.40px;top:834.53px;font-size:10.0px;color:#333333;letter-spacing:1.522px">Components</div>
<svg style="left:68px;top:856px" width="8" height="8" viewBox="0 0 8 8"><path d="M0 0 L7.5 4 L0 8 Z" fill="#6a6a6a"/></svg>
<svg style="left:79px;top:855px" width="15" height="12" viewBox="0 0 15 12"><defs><linearGradient id="fg13" x1="0" y1="0" x2="1" y2="1"><stop offset="0" stop-color="#fff3a8"/><stop offset="1" stop-color="#f2c820"/></linearGradient></defs><path d="M0.5 1.5 Q0.5 0.5 1.5 0.5 H5.5 L6.5 2 H13.5 Q14.5 2 14.5 3 V11.5 H0.5 Z" fill="url(#fg13)" stroke="#a88420" stroke-width="1"/><path d="M1 3.5 H14" stroke="#e8c040" stroke-width="0.8"/></svg>
<div class="t" style="left:96.40px;top:855.53px;font-size:10.0px;color:#333333;letter-spacing:1.487px">Camera</div>
<div class="a" style="left:44px;top:921px;width:500px;height:8px;background:#2e2e2e"></div>
<div class="a" style="left:283px;top:924px;width:20px;height:3px;background:repeating-linear-gradient(90deg,#555 0 1px,transparent 1px 2px)"></div>

</body></html>
